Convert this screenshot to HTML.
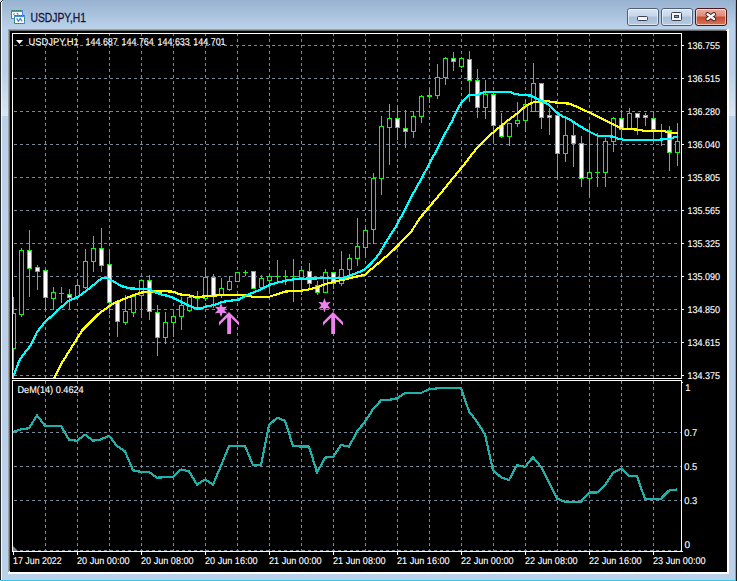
<!DOCTYPE html>
<html><head><meta charset="utf-8"><title>USDJPY,H1</title>
<style>
html,body{margin:0;padding:0;width:739px;height:581px;overflow:hidden;background:#b9d1ea;}
svg{display:block;}
text{font-family:"Liberation Sans",sans-serif;}
</style></head><body>
<svg width="739" height="581" viewBox="0 0 739 581">
<defs>
<linearGradient id="tg" x1="0" y1="0" x2="0" y2="1">
<stop offset="0" stop-color="#97b1d0"/><stop offset="1" stop-color="#bcd3ea"/>
</linearGradient>
<linearGradient id="sg" x1="0" y1="0" x2="0" y2="1">
<stop offset="0" stop-color="#b9d1ea"/><stop offset="1" stop-color="#d9e6f4"/>
</linearGradient>
<linearGradient id="bg1" x1="0" y1="0" x2="0" y2="1">
<stop offset="0" stop-color="#dbe6f3"/><stop offset="0.45" stop-color="#c6d6ea"/><stop offset="0.5" stop-color="#a9bfd9"/><stop offset="1" stop-color="#b7cae0"/>
</linearGradient>
<linearGradient id="bg2" x1="0" y1="0" x2="0" y2="1">
<stop offset="0" stop-color="#eab0a2"/><stop offset="0.45" stop-color="#de8c78"/><stop offset="0.5" stop-color="#c74a2c"/><stop offset="1" stop-color="#d7775d"/>
</linearGradient>
</defs>

<rect x="0" y="0" width="739" height="581" fill="#b9d1ea"/>
<rect x="0" y="0" width="739" height="29" fill="url(#tg)"/>
<g shape-rendering="crispEdges">
<rect x="0" y="0" width="1" height="581" fill="#262626"/>
<rect x="1" y="2" width="1" height="579" fill="#f4f8fc"/>
<rect x="0" y="0" width="2" height="2" fill="#cfdff0"/>
<rect x="1" y="1" width="1" height="1" fill="#303030"/>
<rect x="2" y="0" width="1" height="1" fill="#404040"/>
<rect x="2" y="1" width="1" height="1" fill="#e8f0f8"/>
<rect x="0" y="580" width="736" height="1" fill="#35c8e6"/>
<rect x="735" y="0" width="1" height="581" fill="#35c8e6"/>
<rect x="736" y="0" width="1" height="581" fill="#1a1a1a"/>
<rect x="737" y="0" width="2" height="581" fill="#ffffff"/>
<rect x="8" y="29" width="721" height="545" fill="#ffffff"/>
<rect x="8" y="29" width="719" height="1" fill="#a0a0a0"/>
<rect x="8" y="29" width="1" height="543" fill="#a0a0a0"/>
<rect x="9" y="30" width="717" height="1" fill="#696969"/>
<rect x="9" y="30" width="1" height="541" fill="#696969"/>
<rect x="10" y="31" width="717" height="541" fill="#000000"/>
<rect x="2" y="72" width="6" height="44" fill="url(#sg)"/>
<rect x="729" y="72" width="6" height="44" fill="url(#sg)"/>
</g>
<g shape-rendering="crispEdges">
<rect x="11" y="10" width="12" height="9" fill="#4a88ee"/>
<rect x="12" y="12" width="10" height="6" fill="#fbfcf4"/>
<rect x="14" y="15" width="11" height="9" fill="#4a88ee"/>
<rect x="15" y="17" width="9" height="6" fill="#fbfcf4"/>
</g>
<g fill="#2f7a62" shape-rendering="crispEdges">
<rect x="12" y="10" width="1" height="1"/><rect x="14" y="10" width="1" height="1"/><rect x="16" y="10" width="1" height="1"/><rect x="18" y="10" width="1" height="1"/><rect x="20" y="10" width="1" height="1"/>
<rect x="15" y="15" width="1" height="1"/><rect x="17" y="15" width="1" height="1"/><rect x="19" y="15" width="1" height="1"/><rect x="21" y="15" width="1" height="1"/><rect x="23" y="15" width="1" height="1"/>
<rect x="11" y="12" width="1" height="1"/><rect x="11" y="14" width="1" height="1"/><rect x="11" y="16" width="1" height="1"/>
<rect x="14" y="18" width="1" height="1"/><rect x="14" y="20" width="1" height="1"/><rect x="14" y="22" width="1" height="1"/>
<rect x="24" y="18" width="1" height="1"/><rect x="24" y="20" width="1" height="1"/><rect x="16" y="23" width="1" height="1"/><rect x="18" y="23" width="1" height="1"/><rect x="20" y="23" width="1" height="1"/><rect x="22" y="23" width="1" height="1"/>
</g>
<path d="M13.2 14.6 L14.6 13.4 M16.8 13 L18.4 14.6" fill="none" stroke="#4a88ee" stroke-width="1.1"/>
<path d="M16.6 18.4 L18.4 21.4 L20.2 18.4 L22.2 21.4" fill="none" stroke="#3d7fe6" stroke-width="1.1"/>

<text x="30.5" y="21.6" font-size="12" fill="#15153a" stroke="#15153a" stroke-width="0.3" textLength="55.5" lengthAdjust="spacingAndGlyphs">USDJPY,H1</text>
<rect x="627.5" y="8.5" width="31" height="17" rx="2.5" ry="2.5" fill="url(#bg1)" stroke="#4e5f78" stroke-width="1"/><rect x="628.5" y="9.5" width="29" height="15" rx="1.5" ry="1.5" fill="none" stroke="rgba(255,255,255,0.55)" stroke-width="1"/>
<rect x="661.5" y="8.5" width="31" height="17" rx="2.5" ry="2.5" fill="url(#bg1)" stroke="#4e5f78" stroke-width="1"/><rect x="662.5" y="9.5" width="29" height="15" rx="1.5" ry="1.5" fill="none" stroke="rgba(255,255,255,0.55)" stroke-width="1"/>
<rect x="695.5" y="8.5" width="31" height="17" rx="2.5" ry="2.5" fill="url(#bg2)" stroke="#4a1418" stroke-width="1"/><rect x="696.5" y="9.5" width="29" height="15" rx="1.5" ry="1.5" fill="none" stroke="rgba(255,255,255,0.55)" stroke-width="1"/>
<rect x="637.5" y="16.5" width="10" height="4" rx="1" fill="#f4f4f4" stroke="#3a4150" stroke-width="1"/>
<rect x="671.5" y="12.5" width="10" height="8" rx="1" fill="#f4f4f4" stroke="#3a4150" stroke-width="1"/>
<rect x="674.5" y="15.5" width="4" height="2" fill="#7f9cc4" stroke="#3a4150" stroke-width="1"/>
<path d="M707.6 14.3 L714 19 M714 14.3 L707.6 19" stroke="#3a2020" stroke-width="4.3" stroke-linecap="round"/>
<path d="M707.6 14.3 L714 19 M714 14.3 L707.6 19" stroke="#f6f6f6" stroke-width="2.5" stroke-linecap="round"/>
<path d="M14 45.5h3M20 45.5h3M26 45.5h3M32 45.5h3M38 45.5h3M44 45.5h3M50 45.5h3M56 45.5h3M62 45.5h3M68 45.5h3M74 45.5h3M80 45.5h3M86 45.5h3M92 45.5h3M98 45.5h3M104 45.5h3M110 45.5h3M116 45.5h3M122 45.5h3M128 45.5h3M134 45.5h3M140 45.5h3M146 45.5h3M152 45.5h3M158 45.5h3M164 45.5h3M170 45.5h3M176 45.5h3M182 45.5h3M188 45.5h3M194 45.5h3M200 45.5h3M206 45.5h3M212 45.5h3M218 45.5h3M224 45.5h3M230 45.5h3M236 45.5h3M242 45.5h3M248 45.5h3M254 45.5h3M260 45.5h3M266 45.5h3M272 45.5h3M278 45.5h3M284 45.5h3M290 45.5h3M296 45.5h3M302 45.5h3M308 45.5h3M314 45.5h3M320 45.5h3M326 45.5h3M332 45.5h3M338 45.5h3M344 45.5h3M350 45.5h3M356 45.5h3M362 45.5h3M368 45.5h3M374 45.5h3M380 45.5h3M386 45.5h3M392 45.5h3M398 45.5h3M404 45.5h3M410 45.5h3M416 45.5h3M422 45.5h3M428 45.5h3M434 45.5h3M440 45.5h3M446 45.5h3M452 45.5h3M458 45.5h3M464 45.5h3M470 45.5h3M476 45.5h3M482 45.5h3M488 45.5h3M494 45.5h3M500 45.5h3M506 45.5h3M512 45.5h3M518 45.5h3M524 45.5h3M530 45.5h3M536 45.5h3M542 45.5h3M548 45.5h3M554 45.5h3M560 45.5h3M566 45.5h3M572 45.5h3M578 45.5h3M584 45.5h3M590 45.5h3M596 45.5h3M602 45.5h3M608 45.5h3M614 45.5h3M620 45.5h3M626 45.5h3M632 45.5h3M638 45.5h3M644 45.5h3M650 45.5h3M656 45.5h3M662 45.5h3M668 45.5h3M674 45.5h3M14 78.5h3M20 78.5h3M26 78.5h3M32 78.5h3M38 78.5h3M44 78.5h3M50 78.5h3M56 78.5h3M62 78.5h3M68 78.5h3M74 78.5h3M80 78.5h3M86 78.5h3M92 78.5h3M98 78.5h3M104 78.5h3M110 78.5h3M116 78.5h3M122 78.5h3M128 78.5h3M134 78.5h3M140 78.5h3M146 78.5h3M152 78.5h3M158 78.5h3M164 78.5h3M170 78.5h3M176 78.5h3M182 78.5h3M188 78.5h3M194 78.5h3M200 78.5h3M206 78.5h3M212 78.5h3M218 78.5h3M224 78.5h3M230 78.5h3M236 78.5h3M242 78.5h3M248 78.5h3M254 78.5h3M260 78.5h3M266 78.5h3M272 78.5h3M278 78.5h3M284 78.5h3M290 78.5h3M296 78.5h3M302 78.5h3M308 78.5h3M314 78.5h3M320 78.5h3M326 78.5h3M332 78.5h3M338 78.5h3M344 78.5h3M350 78.5h3M356 78.5h3M362 78.5h3M368 78.5h3M374 78.5h3M380 78.5h3M386 78.5h3M392 78.5h3M398 78.5h3M404 78.5h3M410 78.5h3M416 78.5h3M422 78.5h3M428 78.5h3M434 78.5h3M440 78.5h3M446 78.5h3M452 78.5h3M458 78.5h3M464 78.5h3M470 78.5h3M476 78.5h3M482 78.5h3M488 78.5h3M494 78.5h3M500 78.5h3M506 78.5h3M512 78.5h3M518 78.5h3M524 78.5h3M530 78.5h3M536 78.5h3M542 78.5h3M548 78.5h3M554 78.5h3M560 78.5h3M566 78.5h3M572 78.5h3M578 78.5h3M584 78.5h3M590 78.5h3M596 78.5h3M602 78.5h3M608 78.5h3M614 78.5h3M620 78.5h3M626 78.5h3M632 78.5h3M638 78.5h3M644 78.5h3M650 78.5h3M656 78.5h3M662 78.5h3M668 78.5h3M674 78.5h3M14 111.5h3M20 111.5h3M26 111.5h3M32 111.5h3M38 111.5h3M44 111.5h3M50 111.5h3M56 111.5h3M62 111.5h3M68 111.5h3M74 111.5h3M80 111.5h3M86 111.5h3M92 111.5h3M98 111.5h3M104 111.5h3M110 111.5h3M116 111.5h3M122 111.5h3M128 111.5h3M134 111.5h3M140 111.5h3M146 111.5h3M152 111.5h3M158 111.5h3M164 111.5h3M170 111.5h3M176 111.5h3M182 111.5h3M188 111.5h3M194 111.5h3M200 111.5h3M206 111.5h3M212 111.5h3M218 111.5h3M224 111.5h3M230 111.5h3M236 111.5h3M242 111.5h3M248 111.5h3M254 111.5h3M260 111.5h3M266 111.5h3M272 111.5h3M278 111.5h3M284 111.5h3M290 111.5h3M296 111.5h3M302 111.5h3M308 111.5h3M314 111.5h3M320 111.5h3M326 111.5h3M332 111.5h3M338 111.5h3M344 111.5h3M350 111.5h3M356 111.5h3M362 111.5h3M368 111.5h3M374 111.5h3M380 111.5h3M386 111.5h3M392 111.5h3M398 111.5h3M404 111.5h3M410 111.5h3M416 111.5h3M422 111.5h3M428 111.5h3M434 111.5h3M440 111.5h3M446 111.5h3M452 111.5h3M458 111.5h3M464 111.5h3M470 111.5h3M476 111.5h3M482 111.5h3M488 111.5h3M494 111.5h3M500 111.5h3M506 111.5h3M512 111.5h3M518 111.5h3M524 111.5h3M530 111.5h3M536 111.5h3M542 111.5h3M548 111.5h3M554 111.5h3M560 111.5h3M566 111.5h3M572 111.5h3M578 111.5h3M584 111.5h3M590 111.5h3M596 111.5h3M602 111.5h3M608 111.5h3M614 111.5h3M620 111.5h3M626 111.5h3M632 111.5h3M638 111.5h3M644 111.5h3M650 111.5h3M656 111.5h3M662 111.5h3M668 111.5h3M674 111.5h3M14 144.5h3M20 144.5h3M26 144.5h3M32 144.5h3M38 144.5h3M44 144.5h3M50 144.5h3M56 144.5h3M62 144.5h3M68 144.5h3M74 144.5h3M80 144.5h3M86 144.5h3M92 144.5h3M98 144.5h3M104 144.5h3M110 144.5h3M116 144.5h3M122 144.5h3M128 144.5h3M134 144.5h3M140 144.5h3M146 144.5h3M152 144.5h3M158 144.5h3M164 144.5h3M170 144.5h3M176 144.5h3M182 144.5h3M188 144.5h3M194 144.5h3M200 144.5h3M206 144.5h3M212 144.5h3M218 144.5h3M224 144.5h3M230 144.5h3M236 144.5h3M242 144.5h3M248 144.5h3M254 144.5h3M260 144.5h3M266 144.5h3M272 144.5h3M278 144.5h3M284 144.5h3M290 144.5h3M296 144.5h3M302 144.5h3M308 144.5h3M314 144.5h3M320 144.5h3M326 144.5h3M332 144.5h3M338 144.5h3M344 144.5h3M350 144.5h3M356 144.5h3M362 144.5h3M368 144.5h3M374 144.5h3M380 144.5h3M386 144.5h3M392 144.5h3M398 144.5h3M404 144.5h3M410 144.5h3M416 144.5h3M422 144.5h3M428 144.5h3M434 144.5h3M440 144.5h3M446 144.5h3M452 144.5h3M458 144.5h3M464 144.5h3M470 144.5h3M476 144.5h3M482 144.5h3M488 144.5h3M494 144.5h3M500 144.5h3M506 144.5h3M512 144.5h3M518 144.5h3M524 144.5h3M530 144.5h3M536 144.5h3M542 144.5h3M548 144.5h3M554 144.5h3M560 144.5h3M566 144.5h3M572 144.5h3M578 144.5h3M584 144.5h3M590 144.5h3M596 144.5h3M602 144.5h3M608 144.5h3M614 144.5h3M620 144.5h3M626 144.5h3M632 144.5h3M638 144.5h3M644 144.5h3M650 144.5h3M656 144.5h3M662 144.5h3M668 144.5h3M674 144.5h3M14 177.5h3M20 177.5h3M26 177.5h3M32 177.5h3M38 177.5h3M44 177.5h3M50 177.5h3M56 177.5h3M62 177.5h3M68 177.5h3M74 177.5h3M80 177.5h3M86 177.5h3M92 177.5h3M98 177.5h3M104 177.5h3M110 177.5h3M116 177.5h3M122 177.5h3M128 177.5h3M134 177.5h3M140 177.5h3M146 177.5h3M152 177.5h3M158 177.5h3M164 177.5h3M170 177.5h3M176 177.5h3M182 177.5h3M188 177.5h3M194 177.5h3M200 177.5h3M206 177.5h3M212 177.5h3M218 177.5h3M224 177.5h3M230 177.5h3M236 177.5h3M242 177.5h3M248 177.5h3M254 177.5h3M260 177.5h3M266 177.5h3M272 177.5h3M278 177.5h3M284 177.5h3M290 177.5h3M296 177.5h3M302 177.5h3M308 177.5h3M314 177.5h3M320 177.5h3M326 177.5h3M332 177.5h3M338 177.5h3M344 177.5h3M350 177.5h3M356 177.5h3M362 177.5h3M368 177.5h3M374 177.5h3M380 177.5h3M386 177.5h3M392 177.5h3M398 177.5h3M404 177.5h3M410 177.5h3M416 177.5h3M422 177.5h3M428 177.5h3M434 177.5h3M440 177.5h3M446 177.5h3M452 177.5h3M458 177.5h3M464 177.5h3M470 177.5h3M476 177.5h3M482 177.5h3M488 177.5h3M494 177.5h3M500 177.5h3M506 177.5h3M512 177.5h3M518 177.5h3M524 177.5h3M530 177.5h3M536 177.5h3M542 177.5h3M548 177.5h3M554 177.5h3M560 177.5h3M566 177.5h3M572 177.5h3M578 177.5h3M584 177.5h3M590 177.5h3M596 177.5h3M602 177.5h3M608 177.5h3M614 177.5h3M620 177.5h3M626 177.5h3M632 177.5h3M638 177.5h3M644 177.5h3M650 177.5h3M656 177.5h3M662 177.5h3M668 177.5h3M674 177.5h3M14 210.5h3M20 210.5h3M26 210.5h3M32 210.5h3M38 210.5h3M44 210.5h3M50 210.5h3M56 210.5h3M62 210.5h3M68 210.5h3M74 210.5h3M80 210.5h3M86 210.5h3M92 210.5h3M98 210.5h3M104 210.5h3M110 210.5h3M116 210.5h3M122 210.5h3M128 210.5h3M134 210.5h3M140 210.5h3M146 210.5h3M152 210.5h3M158 210.5h3M164 210.5h3M170 210.5h3M176 210.5h3M182 210.5h3M188 210.5h3M194 210.5h3M200 210.5h3M206 210.5h3M212 210.5h3M218 210.5h3M224 210.5h3M230 210.5h3M236 210.5h3M242 210.5h3M248 210.5h3M254 210.5h3M260 210.5h3M266 210.5h3M272 210.5h3M278 210.5h3M284 210.5h3M290 210.5h3M296 210.5h3M302 210.5h3M308 210.5h3M314 210.5h3M320 210.5h3M326 210.5h3M332 210.5h3M338 210.5h3M344 210.5h3M350 210.5h3M356 210.5h3M362 210.5h3M368 210.5h3M374 210.5h3M380 210.5h3M386 210.5h3M392 210.5h3M398 210.5h3M404 210.5h3M410 210.5h3M416 210.5h3M422 210.5h3M428 210.5h3M434 210.5h3M440 210.5h3M446 210.5h3M452 210.5h3M458 210.5h3M464 210.5h3M470 210.5h3M476 210.5h3M482 210.5h3M488 210.5h3M494 210.5h3M500 210.5h3M506 210.5h3M512 210.5h3M518 210.5h3M524 210.5h3M530 210.5h3M536 210.5h3M542 210.5h3M548 210.5h3M554 210.5h3M560 210.5h3M566 210.5h3M572 210.5h3M578 210.5h3M584 210.5h3M590 210.5h3M596 210.5h3M602 210.5h3M608 210.5h3M614 210.5h3M620 210.5h3M626 210.5h3M632 210.5h3M638 210.5h3M644 210.5h3M650 210.5h3M656 210.5h3M662 210.5h3M668 210.5h3M674 210.5h3M14 243.5h3M20 243.5h3M26 243.5h3M32 243.5h3M38 243.5h3M44 243.5h3M50 243.5h3M56 243.5h3M62 243.5h3M68 243.5h3M74 243.5h3M80 243.5h3M86 243.5h3M92 243.5h3M98 243.5h3M104 243.5h3M110 243.5h3M116 243.5h3M122 243.5h3M128 243.5h3M134 243.5h3M140 243.5h3M146 243.5h3M152 243.5h3M158 243.5h3M164 243.5h3M170 243.5h3M176 243.5h3M182 243.5h3M188 243.5h3M194 243.5h3M200 243.5h3M206 243.5h3M212 243.5h3M218 243.5h3M224 243.5h3M230 243.5h3M236 243.5h3M242 243.5h3M248 243.5h3M254 243.5h3M260 243.5h3M266 243.5h3M272 243.5h3M278 243.5h3M284 243.5h3M290 243.5h3M296 243.5h3M302 243.5h3M308 243.5h3M314 243.5h3M320 243.5h3M326 243.5h3M332 243.5h3M338 243.5h3M344 243.5h3M350 243.5h3M356 243.5h3M362 243.5h3M368 243.5h3M374 243.5h3M380 243.5h3M386 243.5h3M392 243.5h3M398 243.5h3M404 243.5h3M410 243.5h3M416 243.5h3M422 243.5h3M428 243.5h3M434 243.5h3M440 243.5h3M446 243.5h3M452 243.5h3M458 243.5h3M464 243.5h3M470 243.5h3M476 243.5h3M482 243.5h3M488 243.5h3M494 243.5h3M500 243.5h3M506 243.5h3M512 243.5h3M518 243.5h3M524 243.5h3M530 243.5h3M536 243.5h3M542 243.5h3M548 243.5h3M554 243.5h3M560 243.5h3M566 243.5h3M572 243.5h3M578 243.5h3M584 243.5h3M590 243.5h3M596 243.5h3M602 243.5h3M608 243.5h3M614 243.5h3M620 243.5h3M626 243.5h3M632 243.5h3M638 243.5h3M644 243.5h3M650 243.5h3M656 243.5h3M662 243.5h3M668 243.5h3M674 243.5h3M14 276.5h3M20 276.5h3M26 276.5h3M32 276.5h3M38 276.5h3M44 276.5h3M50 276.5h3M56 276.5h3M62 276.5h3M68 276.5h3M74 276.5h3M80 276.5h3M86 276.5h3M92 276.5h3M98 276.5h3M104 276.5h3M110 276.5h3M116 276.5h3M122 276.5h3M128 276.5h3M134 276.5h3M140 276.5h3M146 276.5h3M152 276.5h3M158 276.5h3M164 276.5h3M170 276.5h3M176 276.5h3M182 276.5h3M188 276.5h3M194 276.5h3M200 276.5h3M206 276.5h3M212 276.5h3M218 276.5h3M224 276.5h3M230 276.5h3M236 276.5h3M242 276.5h3M248 276.5h3M254 276.5h3M260 276.5h3M266 276.5h3M272 276.5h3M278 276.5h3M284 276.5h3M290 276.5h3M296 276.5h3M302 276.5h3M308 276.5h3M314 276.5h3M320 276.5h3M326 276.5h3M332 276.5h3M338 276.5h3M344 276.5h3M350 276.5h3M356 276.5h3M362 276.5h3M368 276.5h3M374 276.5h3M380 276.5h3M386 276.5h3M392 276.5h3M398 276.5h3M404 276.5h3M410 276.5h3M416 276.5h3M422 276.5h3M428 276.5h3M434 276.5h3M440 276.5h3M446 276.5h3M452 276.5h3M458 276.5h3M464 276.5h3M470 276.5h3M476 276.5h3M482 276.5h3M488 276.5h3M494 276.5h3M500 276.5h3M506 276.5h3M512 276.5h3M518 276.5h3M524 276.5h3M530 276.5h3M536 276.5h3M542 276.5h3M548 276.5h3M554 276.5h3M560 276.5h3M566 276.5h3M572 276.5h3M578 276.5h3M584 276.5h3M590 276.5h3M596 276.5h3M602 276.5h3M608 276.5h3M614 276.5h3M620 276.5h3M626 276.5h3M632 276.5h3M638 276.5h3M644 276.5h3M650 276.5h3M656 276.5h3M662 276.5h3M668 276.5h3M674 276.5h3M14 309.5h3M20 309.5h3M26 309.5h3M32 309.5h3M38 309.5h3M44 309.5h3M50 309.5h3M56 309.5h3M62 309.5h3M68 309.5h3M74 309.5h3M80 309.5h3M86 309.5h3M92 309.5h3M98 309.5h3M104 309.5h3M110 309.5h3M116 309.5h3M122 309.5h3M128 309.5h3M134 309.5h3M140 309.5h3M146 309.5h3M152 309.5h3M158 309.5h3M164 309.5h3M170 309.5h3M176 309.5h3M182 309.5h3M188 309.5h3M194 309.5h3M200 309.5h3M206 309.5h3M212 309.5h3M218 309.5h3M224 309.5h3M230 309.5h3M236 309.5h3M242 309.5h3M248 309.5h3M254 309.5h3M260 309.5h3M266 309.5h3M272 309.5h3M278 309.5h3M284 309.5h3M290 309.5h3M296 309.5h3M302 309.5h3M308 309.5h3M314 309.5h3M320 309.5h3M326 309.5h3M332 309.5h3M338 309.5h3M344 309.5h3M350 309.5h3M356 309.5h3M362 309.5h3M368 309.5h3M374 309.5h3M380 309.5h3M386 309.5h3M392 309.5h3M398 309.5h3M404 309.5h3M410 309.5h3M416 309.5h3M422 309.5h3M428 309.5h3M434 309.5h3M440 309.5h3M446 309.5h3M452 309.5h3M458 309.5h3M464 309.5h3M470 309.5h3M476 309.5h3M482 309.5h3M488 309.5h3M494 309.5h3M500 309.5h3M506 309.5h3M512 309.5h3M518 309.5h3M524 309.5h3M530 309.5h3M536 309.5h3M542 309.5h3M548 309.5h3M554 309.5h3M560 309.5h3M566 309.5h3M572 309.5h3M578 309.5h3M584 309.5h3M590 309.5h3M596 309.5h3M602 309.5h3M608 309.5h3M614 309.5h3M620 309.5h3M626 309.5h3M632 309.5h3M638 309.5h3M644 309.5h3M650 309.5h3M656 309.5h3M662 309.5h3M668 309.5h3M674 309.5h3M14 342.5h3M20 342.5h3M26 342.5h3M32 342.5h3M38 342.5h3M44 342.5h3M50 342.5h3M56 342.5h3M62 342.5h3M68 342.5h3M74 342.5h3M80 342.5h3M86 342.5h3M92 342.5h3M98 342.5h3M104 342.5h3M110 342.5h3M116 342.5h3M122 342.5h3M128 342.5h3M134 342.5h3M140 342.5h3M146 342.5h3M152 342.5h3M158 342.5h3M164 342.5h3M170 342.5h3M176 342.5h3M182 342.5h3M188 342.5h3M194 342.5h3M200 342.5h3M206 342.5h3M212 342.5h3M218 342.5h3M224 342.5h3M230 342.5h3M236 342.5h3M242 342.5h3M248 342.5h3M254 342.5h3M260 342.5h3M266 342.5h3M272 342.5h3M278 342.5h3M284 342.5h3M290 342.5h3M296 342.5h3M302 342.5h3M308 342.5h3M314 342.5h3M320 342.5h3M326 342.5h3M332 342.5h3M338 342.5h3M344 342.5h3M350 342.5h3M356 342.5h3M362 342.5h3M368 342.5h3M374 342.5h3M380 342.5h3M386 342.5h3M392 342.5h3M398 342.5h3M404 342.5h3M410 342.5h3M416 342.5h3M422 342.5h3M428 342.5h3M434 342.5h3M440 342.5h3M446 342.5h3M452 342.5h3M458 342.5h3M464 342.5h3M470 342.5h3M476 342.5h3M482 342.5h3M488 342.5h3M494 342.5h3M500 342.5h3M506 342.5h3M512 342.5h3M518 342.5h3M524 342.5h3M530 342.5h3M536 342.5h3M542 342.5h3M548 342.5h3M554 342.5h3M560 342.5h3M566 342.5h3M572 342.5h3M578 342.5h3M584 342.5h3M590 342.5h3M596 342.5h3M602 342.5h3M608 342.5h3M614 342.5h3M620 342.5h3M626 342.5h3M632 342.5h3M638 342.5h3M644 342.5h3M650 342.5h3M656 342.5h3M662 342.5h3M668 342.5h3M674 342.5h3M14 375.5h3M20 375.5h3M26 375.5h3M32 375.5h3M38 375.5h3M44 375.5h3M50 375.5h3M56 375.5h3M62 375.5h3M68 375.5h3M74 375.5h3M80 375.5h3M86 375.5h3M92 375.5h3M98 375.5h3M104 375.5h3M110 375.5h3M116 375.5h3M122 375.5h3M128 375.5h3M134 375.5h3M140 375.5h3M146 375.5h3M152 375.5h3M158 375.5h3M164 375.5h3M170 375.5h3M176 375.5h3M182 375.5h3M188 375.5h3M194 375.5h3M200 375.5h3M206 375.5h3M212 375.5h3M218 375.5h3M224 375.5h3M230 375.5h3M236 375.5h3M242 375.5h3M248 375.5h3M254 375.5h3M260 375.5h3M266 375.5h3M272 375.5h3M278 375.5h3M284 375.5h3M290 375.5h3M296 375.5h3M302 375.5h3M308 375.5h3M314 375.5h3M320 375.5h3M326 375.5h3M332 375.5h3M338 375.5h3M344 375.5h3M350 375.5h3M356 375.5h3M362 375.5h3M368 375.5h3M374 375.5h3M380 375.5h3M386 375.5h3M392 375.5h3M398 375.5h3M404 375.5h3M410 375.5h3M416 375.5h3M422 375.5h3M428 375.5h3M434 375.5h3M440 375.5h3M446 375.5h3M452 375.5h3M458 375.5h3M464 375.5h3M470 375.5h3M476 375.5h3M482 375.5h3M488 375.5h3M494 375.5h3M500 375.5h3M506 375.5h3M512 375.5h3M518 375.5h3M524 375.5h3M530 375.5h3M536 375.5h3M542 375.5h3M548 375.5h3M554 375.5h3M560 375.5h3M566 375.5h3M572 375.5h3M578 375.5h3M584 375.5h3M590 375.5h3M596 375.5h3M602 375.5h3M608 375.5h3M614 375.5h3M620 375.5h3M626 375.5h3M632 375.5h3M638 375.5h3M644 375.5h3M650 375.5h3M656 375.5h3M662 375.5h3M668 375.5h3M674 375.5h3M14 432.5h3M20 432.5h3M26 432.5h3M32 432.5h3M38 432.5h3M44 432.5h3M50 432.5h3M56 432.5h3M62 432.5h3M68 432.5h3M74 432.5h3M80 432.5h3M86 432.5h3M92 432.5h3M98 432.5h3M104 432.5h3M110 432.5h3M116 432.5h3M122 432.5h3M128 432.5h3M134 432.5h3M140 432.5h3M146 432.5h3M152 432.5h3M158 432.5h3M164 432.5h3M170 432.5h3M176 432.5h3M182 432.5h3M188 432.5h3M194 432.5h3M200 432.5h3M206 432.5h3M212 432.5h3M218 432.5h3M224 432.5h3M230 432.5h3M236 432.5h3M242 432.5h3M248 432.5h3M254 432.5h3M260 432.5h3M266 432.5h3M272 432.5h3M278 432.5h3M284 432.5h3M290 432.5h3M296 432.5h3M302 432.5h3M308 432.5h3M314 432.5h3M320 432.5h3M326 432.5h3M332 432.5h3M338 432.5h3M344 432.5h3M350 432.5h3M356 432.5h3M362 432.5h3M368 432.5h3M374 432.5h3M380 432.5h3M386 432.5h3M392 432.5h3M398 432.5h3M404 432.5h3M410 432.5h3M416 432.5h3M422 432.5h3M428 432.5h3M434 432.5h3M440 432.5h3M446 432.5h3M452 432.5h3M458 432.5h3M464 432.5h3M470 432.5h3M476 432.5h3M482 432.5h3M488 432.5h3M494 432.5h3M500 432.5h3M506 432.5h3M512 432.5h3M518 432.5h3M524 432.5h3M530 432.5h3M536 432.5h3M542 432.5h3M548 432.5h3M554 432.5h3M560 432.5h3M566 432.5h3M572 432.5h3M578 432.5h3M584 432.5h3M590 432.5h3M596 432.5h3M602 432.5h3M608 432.5h3M614 432.5h3M620 432.5h3M626 432.5h3M632 432.5h3M638 432.5h3M644 432.5h3M650 432.5h3M656 432.5h3M662 432.5h3M668 432.5h3M674 432.5h3M680 432.5h1M14 466.5h3M20 466.5h3M26 466.5h3M32 466.5h3M38 466.5h3M44 466.5h3M50 466.5h3M56 466.5h3M62 466.5h3M68 466.5h3M74 466.5h3M80 466.5h3M86 466.5h3M92 466.5h3M98 466.5h3M104 466.5h3M110 466.5h3M116 466.5h3M122 466.5h3M128 466.5h3M134 466.5h3M140 466.5h3M146 466.5h3M152 466.5h3M158 466.5h3M164 466.5h3M170 466.5h3M176 466.5h3M182 466.5h3M188 466.5h3M194 466.5h3M200 466.5h3M206 466.5h3M212 466.5h3M218 466.5h3M224 466.5h3M230 466.5h3M236 466.5h3M242 466.5h3M248 466.5h3M254 466.5h3M260 466.5h3M266 466.5h3M272 466.5h3M278 466.5h3M284 466.5h3M290 466.5h3M296 466.5h3M302 466.5h3M308 466.5h3M314 466.5h3M320 466.5h3M326 466.5h3M332 466.5h3M338 466.5h3M344 466.5h3M350 466.5h3M356 466.5h3M362 466.5h3M368 466.5h3M374 466.5h3M380 466.5h3M386 466.5h3M392 466.5h3M398 466.5h3M404 466.5h3M410 466.5h3M416 466.5h3M422 466.5h3M428 466.5h3M434 466.5h3M440 466.5h3M446 466.5h3M452 466.5h3M458 466.5h3M464 466.5h3M470 466.5h3M476 466.5h3M482 466.5h3M488 466.5h3M494 466.5h3M500 466.5h3M506 466.5h3M512 466.5h3M518 466.5h3M524 466.5h3M530 466.5h3M536 466.5h3M542 466.5h3M548 466.5h3M554 466.5h3M560 466.5h3M566 466.5h3M572 466.5h3M578 466.5h3M584 466.5h3M590 466.5h3M596 466.5h3M602 466.5h3M608 466.5h3M614 466.5h3M620 466.5h3M626 466.5h3M632 466.5h3M638 466.5h3M644 466.5h3M650 466.5h3M656 466.5h3M662 466.5h3M668 466.5h3M674 466.5h3M680 466.5h1M14 500.5h3M20 500.5h3M26 500.5h3M32 500.5h3M38 500.5h3M44 500.5h3M50 500.5h3M56 500.5h3M62 500.5h3M68 500.5h3M74 500.5h3M80 500.5h3M86 500.5h3M92 500.5h3M98 500.5h3M104 500.5h3M110 500.5h3M116 500.5h3M122 500.5h3M128 500.5h3M134 500.5h3M140 500.5h3M146 500.5h3M152 500.5h3M158 500.5h3M164 500.5h3M170 500.5h3M176 500.5h3M182 500.5h3M188 500.5h3M194 500.5h3M200 500.5h3M206 500.5h3M212 500.5h3M218 500.5h3M224 500.5h3M230 500.5h3M236 500.5h3M242 500.5h3M248 500.5h3M254 500.5h3M260 500.5h3M266 500.5h3M272 500.5h3M278 500.5h3M284 500.5h3M290 500.5h3M296 500.5h3M302 500.5h3M308 500.5h3M314 500.5h3M320 500.5h3M326 500.5h3M332 500.5h3M338 500.5h3M344 500.5h3M350 500.5h3M356 500.5h3M362 500.5h3M368 500.5h3M374 500.5h3M380 500.5h3M386 500.5h3M392 500.5h3M398 500.5h3M404 500.5h3M410 500.5h3M416 500.5h3M422 500.5h3M428 500.5h3M434 500.5h3M440 500.5h3M446 500.5h3M452 500.5h3M458 500.5h3M464 500.5h3M470 500.5h3M476 500.5h3M482 500.5h3M488 500.5h3M494 500.5h3M500 500.5h3M506 500.5h3M512 500.5h3M518 500.5h3M524 500.5h3M530 500.5h3M536 500.5h3M542 500.5h3M548 500.5h3M554 500.5h3M560 500.5h3M566 500.5h3M572 500.5h3M578 500.5h3M584 500.5h3M590 500.5h3M596 500.5h3M602 500.5h3M608 500.5h3M614 500.5h3M620 500.5h3M626 500.5h3M632 500.5h3M638 500.5h3M644 500.5h3M650 500.5h3M656 500.5h3M662 500.5h3M668 500.5h3M674 500.5h3M680 500.5h1M14 550.5h3M20 550.5h3M26 550.5h3M32 550.5h3M38 550.5h3M44 550.5h3M50 550.5h3M56 550.5h3M62 550.5h3M68 550.5h3M74 550.5h3M80 550.5h3M86 550.5h3M92 550.5h3M98 550.5h3M104 550.5h3M110 550.5h3M116 550.5h3M122 550.5h3M128 550.5h3M134 550.5h3M140 550.5h3M146 550.5h3M152 550.5h3M158 550.5h3M164 550.5h3M170 550.5h3M176 550.5h3M182 550.5h3M188 550.5h3M194 550.5h3M200 550.5h3M206 550.5h3M212 550.5h3M218 550.5h3M224 550.5h3M230 550.5h3M236 550.5h3M242 550.5h3M248 550.5h3M254 550.5h3M260 550.5h3M266 550.5h3M272 550.5h3M278 550.5h3M284 550.5h3M290 550.5h3M296 550.5h3M302 550.5h3M308 550.5h3M314 550.5h3M320 550.5h3M326 550.5h3M332 550.5h3M338 550.5h3M344 550.5h3M350 550.5h3M356 550.5h3M362 550.5h3M368 550.5h3M374 550.5h3M380 550.5h3M386 550.5h3M392 550.5h3M398 550.5h3M404 550.5h3M410 550.5h3M416 550.5h3M422 550.5h3M428 550.5h3M434 550.5h3M440 550.5h3M446 550.5h3M452 550.5h3M458 550.5h3M464 550.5h3M470 550.5h3M476 550.5h3M482 550.5h3M488 550.5h3M494 550.5h3M500 550.5h3M506 550.5h3M512 550.5h3M518 550.5h3M524 550.5h3M530 550.5h3M536 550.5h3M542 550.5h3M548 550.5h3M554 550.5h3M560 550.5h3M566 550.5h3M572 550.5h3M578 550.5h3M584 550.5h3M590 550.5h3M596 550.5h3M602 550.5h3M608 550.5h3M614 550.5h3M620 550.5h3M626 550.5h3M632 550.5h3M638 550.5h3M644 550.5h3M650 550.5h3M656 550.5h3M662 550.5h3M668 550.5h3M674 550.5h3M680 550.5h1M45.5 34v2M45.5 39v3M45.5 45v3M45.5 51v3M45.5 57v3M45.5 63v3M45.5 69v3M45.5 75v3M45.5 81v3M45.5 87v3M45.5 93v3M45.5 99v3M45.5 105v3M45.5 111v3M45.5 117v3M45.5 123v3M45.5 129v3M45.5 135v3M45.5 141v3M45.5 147v3M45.5 153v3M45.5 159v3M45.5 165v3M45.5 171v3M45.5 177v3M45.5 183v3M45.5 189v3M45.5 195v3M45.5 201v3M45.5 207v3M45.5 213v3M45.5 219v3M45.5 225v3M45.5 231v3M45.5 237v3M45.5 243v3M45.5 249v3M45.5 255v3M45.5 261v3M45.5 267v3M45.5 273v3M45.5 279v3M45.5 285v3M45.5 291v3M45.5 297v3M45.5 303v3M45.5 309v3M45.5 315v3M45.5 321v3M45.5 327v3M45.5 333v3M45.5 339v3M45.5 345v3M45.5 351v3M45.5 357v3M45.5 363v3M45.5 369v3M45.5 375v3M45.5 381v3M45.5 387v3M45.5 393v3M45.5 399v3M45.5 405v3M45.5 411v3M45.5 417v3M45.5 423v3M45.5 429v3M45.5 435v3M45.5 441v3M45.5 447v3M45.5 453v3M45.5 459v3M45.5 465v3M45.5 471v3M45.5 477v3M45.5 483v3M45.5 489v3M45.5 495v3M45.5 501v3M45.5 507v3M45.5 513v3M45.5 519v3M45.5 525v3M45.5 531v3M45.5 537v3M45.5 543v3M45.5 549v2M77.5 34v2M77.5 39v3M77.5 45v3M77.5 51v3M77.5 57v3M77.5 63v3M77.5 69v3M77.5 75v3M77.5 81v3M77.5 87v3M77.5 93v3M77.5 99v3M77.5 105v3M77.5 111v3M77.5 117v3M77.5 123v3M77.5 129v3M77.5 135v3M77.5 141v3M77.5 147v3M77.5 153v3M77.5 159v3M77.5 165v3M77.5 171v3M77.5 177v3M77.5 183v3M77.5 189v3M77.5 195v3M77.5 201v3M77.5 207v3M77.5 213v3M77.5 219v3M77.5 225v3M77.5 231v3M77.5 237v3M77.5 243v3M77.5 249v3M77.5 255v3M77.5 261v3M77.5 267v3M77.5 273v3M77.5 279v3M77.5 285v3M77.5 291v3M77.5 297v3M77.5 303v3M77.5 309v3M77.5 315v3M77.5 321v3M77.5 327v3M77.5 333v3M77.5 339v3M77.5 345v3M77.5 351v3M77.5 357v3M77.5 363v3M77.5 369v3M77.5 375v3M77.5 381v3M77.5 387v3M77.5 393v3M77.5 399v3M77.5 405v3M77.5 411v3M77.5 417v3M77.5 423v3M77.5 429v3M77.5 435v3M77.5 441v3M77.5 447v3M77.5 453v3M77.5 459v3M77.5 465v3M77.5 471v3M77.5 477v3M77.5 483v3M77.5 489v3M77.5 495v3M77.5 501v3M77.5 507v3M77.5 513v3M77.5 519v3M77.5 525v3M77.5 531v3M77.5 537v3M77.5 543v3M77.5 549v2M109.5 34v2M109.5 39v3M109.5 45v3M109.5 51v3M109.5 57v3M109.5 63v3M109.5 69v3M109.5 75v3M109.5 81v3M109.5 87v3M109.5 93v3M109.5 99v3M109.5 105v3M109.5 111v3M109.5 117v3M109.5 123v3M109.5 129v3M109.5 135v3M109.5 141v3M109.5 147v3M109.5 153v3M109.5 159v3M109.5 165v3M109.5 171v3M109.5 177v3M109.5 183v3M109.5 189v3M109.5 195v3M109.5 201v3M109.5 207v3M109.5 213v3M109.5 219v3M109.5 225v3M109.5 231v3M109.5 237v3M109.5 243v3M109.5 249v3M109.5 255v3M109.5 261v3M109.5 267v3M109.5 273v3M109.5 279v3M109.5 285v3M109.5 291v3M109.5 297v3M109.5 303v3M109.5 309v3M109.5 315v3M109.5 321v3M109.5 327v3M109.5 333v3M109.5 339v3M109.5 345v3M109.5 351v3M109.5 357v3M109.5 363v3M109.5 369v3M109.5 375v3M109.5 381v3M109.5 387v3M109.5 393v3M109.5 399v3M109.5 405v3M109.5 411v3M109.5 417v3M109.5 423v3M109.5 429v3M109.5 435v3M109.5 441v3M109.5 447v3M109.5 453v3M109.5 459v3M109.5 465v3M109.5 471v3M109.5 477v3M109.5 483v3M109.5 489v3M109.5 495v3M109.5 501v3M109.5 507v3M109.5 513v3M109.5 519v3M109.5 525v3M109.5 531v3M109.5 537v3M109.5 543v3M109.5 549v2M141.5 34v2M141.5 39v3M141.5 45v3M141.5 51v3M141.5 57v3M141.5 63v3M141.5 69v3M141.5 75v3M141.5 81v3M141.5 87v3M141.5 93v3M141.5 99v3M141.5 105v3M141.5 111v3M141.5 117v3M141.5 123v3M141.5 129v3M141.5 135v3M141.5 141v3M141.5 147v3M141.5 153v3M141.5 159v3M141.5 165v3M141.5 171v3M141.5 177v3M141.5 183v3M141.5 189v3M141.5 195v3M141.5 201v3M141.5 207v3M141.5 213v3M141.5 219v3M141.5 225v3M141.5 231v3M141.5 237v3M141.5 243v3M141.5 249v3M141.5 255v3M141.5 261v3M141.5 267v3M141.5 273v3M141.5 279v3M141.5 285v3M141.5 291v3M141.5 297v3M141.5 303v3M141.5 309v3M141.5 315v3M141.5 321v3M141.5 327v3M141.5 333v3M141.5 339v3M141.5 345v3M141.5 351v3M141.5 357v3M141.5 363v3M141.5 369v3M141.5 375v3M141.5 381v3M141.5 387v3M141.5 393v3M141.5 399v3M141.5 405v3M141.5 411v3M141.5 417v3M141.5 423v3M141.5 429v3M141.5 435v3M141.5 441v3M141.5 447v3M141.5 453v3M141.5 459v3M141.5 465v3M141.5 471v3M141.5 477v3M141.5 483v3M141.5 489v3M141.5 495v3M141.5 501v3M141.5 507v3M141.5 513v3M141.5 519v3M141.5 525v3M141.5 531v3M141.5 537v3M141.5 543v3M141.5 549v2M173.5 34v2M173.5 39v3M173.5 45v3M173.5 51v3M173.5 57v3M173.5 63v3M173.5 69v3M173.5 75v3M173.5 81v3M173.5 87v3M173.5 93v3M173.5 99v3M173.5 105v3M173.5 111v3M173.5 117v3M173.5 123v3M173.5 129v3M173.5 135v3M173.5 141v3M173.5 147v3M173.5 153v3M173.5 159v3M173.5 165v3M173.5 171v3M173.5 177v3M173.5 183v3M173.5 189v3M173.5 195v3M173.5 201v3M173.5 207v3M173.5 213v3M173.5 219v3M173.5 225v3M173.5 231v3M173.5 237v3M173.5 243v3M173.5 249v3M173.5 255v3M173.5 261v3M173.5 267v3M173.5 273v3M173.5 279v3M173.5 285v3M173.5 291v3M173.5 297v3M173.5 303v3M173.5 309v3M173.5 315v3M173.5 321v3M173.5 327v3M173.5 333v3M173.5 339v3M173.5 345v3M173.5 351v3M173.5 357v3M173.5 363v3M173.5 369v3M173.5 375v3M173.5 381v3M173.5 387v3M173.5 393v3M173.5 399v3M173.5 405v3M173.5 411v3M173.5 417v3M173.5 423v3M173.5 429v3M173.5 435v3M173.5 441v3M173.5 447v3M173.5 453v3M173.5 459v3M173.5 465v3M173.5 471v3M173.5 477v3M173.5 483v3M173.5 489v3M173.5 495v3M173.5 501v3M173.5 507v3M173.5 513v3M173.5 519v3M173.5 525v3M173.5 531v3M173.5 537v3M173.5 543v3M173.5 549v2M205.5 34v2M205.5 39v3M205.5 45v3M205.5 51v3M205.5 57v3M205.5 63v3M205.5 69v3M205.5 75v3M205.5 81v3M205.5 87v3M205.5 93v3M205.5 99v3M205.5 105v3M205.5 111v3M205.5 117v3M205.5 123v3M205.5 129v3M205.5 135v3M205.5 141v3M205.5 147v3M205.5 153v3M205.5 159v3M205.5 165v3M205.5 171v3M205.5 177v3M205.5 183v3M205.5 189v3M205.5 195v3M205.5 201v3M205.5 207v3M205.5 213v3M205.5 219v3M205.5 225v3M205.5 231v3M205.5 237v3M205.5 243v3M205.5 249v3M205.5 255v3M205.5 261v3M205.5 267v3M205.5 273v3M205.5 279v3M205.5 285v3M205.5 291v3M205.5 297v3M205.5 303v3M205.5 309v3M205.5 315v3M205.5 321v3M205.5 327v3M205.5 333v3M205.5 339v3M205.5 345v3M205.5 351v3M205.5 357v3M205.5 363v3M205.5 369v3M205.5 375v3M205.5 381v3M205.5 387v3M205.5 393v3M205.5 399v3M205.5 405v3M205.5 411v3M205.5 417v3M205.5 423v3M205.5 429v3M205.5 435v3M205.5 441v3M205.5 447v3M205.5 453v3M205.5 459v3M205.5 465v3M205.5 471v3M205.5 477v3M205.5 483v3M205.5 489v3M205.5 495v3M205.5 501v3M205.5 507v3M205.5 513v3M205.5 519v3M205.5 525v3M205.5 531v3M205.5 537v3M205.5 543v3M205.5 549v2M237.5 34v2M237.5 39v3M237.5 45v3M237.5 51v3M237.5 57v3M237.5 63v3M237.5 69v3M237.5 75v3M237.5 81v3M237.5 87v3M237.5 93v3M237.5 99v3M237.5 105v3M237.5 111v3M237.5 117v3M237.5 123v3M237.5 129v3M237.5 135v3M237.5 141v3M237.5 147v3M237.5 153v3M237.5 159v3M237.5 165v3M237.5 171v3M237.5 177v3M237.5 183v3M237.5 189v3M237.5 195v3M237.5 201v3M237.5 207v3M237.5 213v3M237.5 219v3M237.5 225v3M237.5 231v3M237.5 237v3M237.5 243v3M237.5 249v3M237.5 255v3M237.5 261v3M237.5 267v3M237.5 273v3M237.5 279v3M237.5 285v3M237.5 291v3M237.5 297v3M237.5 303v3M237.5 309v3M237.5 315v3M237.5 321v3M237.5 327v3M237.5 333v3M237.5 339v3M237.5 345v3M237.5 351v3M237.5 357v3M237.5 363v3M237.5 369v3M237.5 375v3M237.5 381v3M237.5 387v3M237.5 393v3M237.5 399v3M237.5 405v3M237.5 411v3M237.5 417v3M237.5 423v3M237.5 429v3M237.5 435v3M237.5 441v3M237.5 447v3M237.5 453v3M237.5 459v3M237.5 465v3M237.5 471v3M237.5 477v3M237.5 483v3M237.5 489v3M237.5 495v3M237.5 501v3M237.5 507v3M237.5 513v3M237.5 519v3M237.5 525v3M237.5 531v3M237.5 537v3M237.5 543v3M237.5 549v2M269.5 34v2M269.5 39v3M269.5 45v3M269.5 51v3M269.5 57v3M269.5 63v3M269.5 69v3M269.5 75v3M269.5 81v3M269.5 87v3M269.5 93v3M269.5 99v3M269.5 105v3M269.5 111v3M269.5 117v3M269.5 123v3M269.5 129v3M269.5 135v3M269.5 141v3M269.5 147v3M269.5 153v3M269.5 159v3M269.5 165v3M269.5 171v3M269.5 177v3M269.5 183v3M269.5 189v3M269.5 195v3M269.5 201v3M269.5 207v3M269.5 213v3M269.5 219v3M269.5 225v3M269.5 231v3M269.5 237v3M269.5 243v3M269.5 249v3M269.5 255v3M269.5 261v3M269.5 267v3M269.5 273v3M269.5 279v3M269.5 285v3M269.5 291v3M269.5 297v3M269.5 303v3M269.5 309v3M269.5 315v3M269.5 321v3M269.5 327v3M269.5 333v3M269.5 339v3M269.5 345v3M269.5 351v3M269.5 357v3M269.5 363v3M269.5 369v3M269.5 375v3M269.5 381v3M269.5 387v3M269.5 393v3M269.5 399v3M269.5 405v3M269.5 411v3M269.5 417v3M269.5 423v3M269.5 429v3M269.5 435v3M269.5 441v3M269.5 447v3M269.5 453v3M269.5 459v3M269.5 465v3M269.5 471v3M269.5 477v3M269.5 483v3M269.5 489v3M269.5 495v3M269.5 501v3M269.5 507v3M269.5 513v3M269.5 519v3M269.5 525v3M269.5 531v3M269.5 537v3M269.5 543v3M269.5 549v2M301.5 34v2M301.5 39v3M301.5 45v3M301.5 51v3M301.5 57v3M301.5 63v3M301.5 69v3M301.5 75v3M301.5 81v3M301.5 87v3M301.5 93v3M301.5 99v3M301.5 105v3M301.5 111v3M301.5 117v3M301.5 123v3M301.5 129v3M301.5 135v3M301.5 141v3M301.5 147v3M301.5 153v3M301.5 159v3M301.5 165v3M301.5 171v3M301.5 177v3M301.5 183v3M301.5 189v3M301.5 195v3M301.5 201v3M301.5 207v3M301.5 213v3M301.5 219v3M301.5 225v3M301.5 231v3M301.5 237v3M301.5 243v3M301.5 249v3M301.5 255v3M301.5 261v3M301.5 267v3M301.5 273v3M301.5 279v3M301.5 285v3M301.5 291v3M301.5 297v3M301.5 303v3M301.5 309v3M301.5 315v3M301.5 321v3M301.5 327v3M301.5 333v3M301.5 339v3M301.5 345v3M301.5 351v3M301.5 357v3M301.5 363v3M301.5 369v3M301.5 375v3M301.5 381v3M301.5 387v3M301.5 393v3M301.5 399v3M301.5 405v3M301.5 411v3M301.5 417v3M301.5 423v3M301.5 429v3M301.5 435v3M301.5 441v3M301.5 447v3M301.5 453v3M301.5 459v3M301.5 465v3M301.5 471v3M301.5 477v3M301.5 483v3M301.5 489v3M301.5 495v3M301.5 501v3M301.5 507v3M301.5 513v3M301.5 519v3M301.5 525v3M301.5 531v3M301.5 537v3M301.5 543v3M301.5 549v2M333.5 34v2M333.5 39v3M333.5 45v3M333.5 51v3M333.5 57v3M333.5 63v3M333.5 69v3M333.5 75v3M333.5 81v3M333.5 87v3M333.5 93v3M333.5 99v3M333.5 105v3M333.5 111v3M333.5 117v3M333.5 123v3M333.5 129v3M333.5 135v3M333.5 141v3M333.5 147v3M333.5 153v3M333.5 159v3M333.5 165v3M333.5 171v3M333.5 177v3M333.5 183v3M333.5 189v3M333.5 195v3M333.5 201v3M333.5 207v3M333.5 213v3M333.5 219v3M333.5 225v3M333.5 231v3M333.5 237v3M333.5 243v3M333.5 249v3M333.5 255v3M333.5 261v3M333.5 267v3M333.5 273v3M333.5 279v3M333.5 285v3M333.5 291v3M333.5 297v3M333.5 303v3M333.5 309v3M333.5 315v3M333.5 321v3M333.5 327v3M333.5 333v3M333.5 339v3M333.5 345v3M333.5 351v3M333.5 357v3M333.5 363v3M333.5 369v3M333.5 375v3M333.5 381v3M333.5 387v3M333.5 393v3M333.5 399v3M333.5 405v3M333.5 411v3M333.5 417v3M333.5 423v3M333.5 429v3M333.5 435v3M333.5 441v3M333.5 447v3M333.5 453v3M333.5 459v3M333.5 465v3M333.5 471v3M333.5 477v3M333.5 483v3M333.5 489v3M333.5 495v3M333.5 501v3M333.5 507v3M333.5 513v3M333.5 519v3M333.5 525v3M333.5 531v3M333.5 537v3M333.5 543v3M333.5 549v2M365.5 34v2M365.5 39v3M365.5 45v3M365.5 51v3M365.5 57v3M365.5 63v3M365.5 69v3M365.5 75v3M365.5 81v3M365.5 87v3M365.5 93v3M365.5 99v3M365.5 105v3M365.5 111v3M365.5 117v3M365.5 123v3M365.5 129v3M365.5 135v3M365.5 141v3M365.5 147v3M365.5 153v3M365.5 159v3M365.5 165v3M365.5 171v3M365.5 177v3M365.5 183v3M365.5 189v3M365.5 195v3M365.5 201v3M365.5 207v3M365.5 213v3M365.5 219v3M365.5 225v3M365.5 231v3M365.5 237v3M365.5 243v3M365.5 249v3M365.5 255v3M365.5 261v3M365.5 267v3M365.5 273v3M365.5 279v3M365.5 285v3M365.5 291v3M365.5 297v3M365.5 303v3M365.5 309v3M365.5 315v3M365.5 321v3M365.5 327v3M365.5 333v3M365.5 339v3M365.5 345v3M365.5 351v3M365.5 357v3M365.5 363v3M365.5 369v3M365.5 375v3M365.5 381v3M365.5 387v3M365.5 393v3M365.5 399v3M365.5 405v3M365.5 411v3M365.5 417v3M365.5 423v3M365.5 429v3M365.5 435v3M365.5 441v3M365.5 447v3M365.5 453v3M365.5 459v3M365.5 465v3M365.5 471v3M365.5 477v3M365.5 483v3M365.5 489v3M365.5 495v3M365.5 501v3M365.5 507v3M365.5 513v3M365.5 519v3M365.5 525v3M365.5 531v3M365.5 537v3M365.5 543v3M365.5 549v2M397.5 34v2M397.5 39v3M397.5 45v3M397.5 51v3M397.5 57v3M397.5 63v3M397.5 69v3M397.5 75v3M397.5 81v3M397.5 87v3M397.5 93v3M397.5 99v3M397.5 105v3M397.5 111v3M397.5 117v3M397.5 123v3M397.5 129v3M397.5 135v3M397.5 141v3M397.5 147v3M397.5 153v3M397.5 159v3M397.5 165v3M397.5 171v3M397.5 177v3M397.5 183v3M397.5 189v3M397.5 195v3M397.5 201v3M397.5 207v3M397.5 213v3M397.5 219v3M397.5 225v3M397.5 231v3M397.5 237v3M397.5 243v3M397.5 249v3M397.5 255v3M397.5 261v3M397.5 267v3M397.5 273v3M397.5 279v3M397.5 285v3M397.5 291v3M397.5 297v3M397.5 303v3M397.5 309v3M397.5 315v3M397.5 321v3M397.5 327v3M397.5 333v3M397.5 339v3M397.5 345v3M397.5 351v3M397.5 357v3M397.5 363v3M397.5 369v3M397.5 375v3M397.5 381v3M397.5 387v3M397.5 393v3M397.5 399v3M397.5 405v3M397.5 411v3M397.5 417v3M397.5 423v3M397.5 429v3M397.5 435v3M397.5 441v3M397.5 447v3M397.5 453v3M397.5 459v3M397.5 465v3M397.5 471v3M397.5 477v3M397.5 483v3M397.5 489v3M397.5 495v3M397.5 501v3M397.5 507v3M397.5 513v3M397.5 519v3M397.5 525v3M397.5 531v3M397.5 537v3M397.5 543v3M397.5 549v2M429.5 34v2M429.5 39v3M429.5 45v3M429.5 51v3M429.5 57v3M429.5 63v3M429.5 69v3M429.5 75v3M429.5 81v3M429.5 87v3M429.5 93v3M429.5 99v3M429.5 105v3M429.5 111v3M429.5 117v3M429.5 123v3M429.5 129v3M429.5 135v3M429.5 141v3M429.5 147v3M429.5 153v3M429.5 159v3M429.5 165v3M429.5 171v3M429.5 177v3M429.5 183v3M429.5 189v3M429.5 195v3M429.5 201v3M429.5 207v3M429.5 213v3M429.5 219v3M429.5 225v3M429.5 231v3M429.5 237v3M429.5 243v3M429.5 249v3M429.5 255v3M429.5 261v3M429.5 267v3M429.5 273v3M429.5 279v3M429.5 285v3M429.5 291v3M429.5 297v3M429.5 303v3M429.5 309v3M429.5 315v3M429.5 321v3M429.5 327v3M429.5 333v3M429.5 339v3M429.5 345v3M429.5 351v3M429.5 357v3M429.5 363v3M429.5 369v3M429.5 375v3M429.5 381v3M429.5 387v3M429.5 393v3M429.5 399v3M429.5 405v3M429.5 411v3M429.5 417v3M429.5 423v3M429.5 429v3M429.5 435v3M429.5 441v3M429.5 447v3M429.5 453v3M429.5 459v3M429.5 465v3M429.5 471v3M429.5 477v3M429.5 483v3M429.5 489v3M429.5 495v3M429.5 501v3M429.5 507v3M429.5 513v3M429.5 519v3M429.5 525v3M429.5 531v3M429.5 537v3M429.5 543v3M429.5 549v2M461.5 34v2M461.5 39v3M461.5 45v3M461.5 51v3M461.5 57v3M461.5 63v3M461.5 69v3M461.5 75v3M461.5 81v3M461.5 87v3M461.5 93v3M461.5 99v3M461.5 105v3M461.5 111v3M461.5 117v3M461.5 123v3M461.5 129v3M461.5 135v3M461.5 141v3M461.5 147v3M461.5 153v3M461.5 159v3M461.5 165v3M461.5 171v3M461.5 177v3M461.5 183v3M461.5 189v3M461.5 195v3M461.5 201v3M461.5 207v3M461.5 213v3M461.5 219v3M461.5 225v3M461.5 231v3M461.5 237v3M461.5 243v3M461.5 249v3M461.5 255v3M461.5 261v3M461.5 267v3M461.5 273v3M461.5 279v3M461.5 285v3M461.5 291v3M461.5 297v3M461.5 303v3M461.5 309v3M461.5 315v3M461.5 321v3M461.5 327v3M461.5 333v3M461.5 339v3M461.5 345v3M461.5 351v3M461.5 357v3M461.5 363v3M461.5 369v3M461.5 375v3M461.5 381v3M461.5 387v3M461.5 393v3M461.5 399v3M461.5 405v3M461.5 411v3M461.5 417v3M461.5 423v3M461.5 429v3M461.5 435v3M461.5 441v3M461.5 447v3M461.5 453v3M461.5 459v3M461.5 465v3M461.5 471v3M461.5 477v3M461.5 483v3M461.5 489v3M461.5 495v3M461.5 501v3M461.5 507v3M461.5 513v3M461.5 519v3M461.5 525v3M461.5 531v3M461.5 537v3M461.5 543v3M461.5 549v2M493.5 34v2M493.5 39v3M493.5 45v3M493.5 51v3M493.5 57v3M493.5 63v3M493.5 69v3M493.5 75v3M493.5 81v3M493.5 87v3M493.5 93v3M493.5 99v3M493.5 105v3M493.5 111v3M493.5 117v3M493.5 123v3M493.5 129v3M493.5 135v3M493.5 141v3M493.5 147v3M493.5 153v3M493.5 159v3M493.5 165v3M493.5 171v3M493.5 177v3M493.5 183v3M493.5 189v3M493.5 195v3M493.5 201v3M493.5 207v3M493.5 213v3M493.5 219v3M493.5 225v3M493.5 231v3M493.5 237v3M493.5 243v3M493.5 249v3M493.5 255v3M493.5 261v3M493.5 267v3M493.5 273v3M493.5 279v3M493.5 285v3M493.5 291v3M493.5 297v3M493.5 303v3M493.5 309v3M493.5 315v3M493.5 321v3M493.5 327v3M493.5 333v3M493.5 339v3M493.5 345v3M493.5 351v3M493.5 357v3M493.5 363v3M493.5 369v3M493.5 375v3M493.5 381v3M493.5 387v3M493.5 393v3M493.5 399v3M493.5 405v3M493.5 411v3M493.5 417v3M493.5 423v3M493.5 429v3M493.5 435v3M493.5 441v3M493.5 447v3M493.5 453v3M493.5 459v3M493.5 465v3M493.5 471v3M493.5 477v3M493.5 483v3M493.5 489v3M493.5 495v3M493.5 501v3M493.5 507v3M493.5 513v3M493.5 519v3M493.5 525v3M493.5 531v3M493.5 537v3M493.5 543v3M493.5 549v2M525.5 34v2M525.5 39v3M525.5 45v3M525.5 51v3M525.5 57v3M525.5 63v3M525.5 69v3M525.5 75v3M525.5 81v3M525.5 87v3M525.5 93v3M525.5 99v3M525.5 105v3M525.5 111v3M525.5 117v3M525.5 123v3M525.5 129v3M525.5 135v3M525.5 141v3M525.5 147v3M525.5 153v3M525.5 159v3M525.5 165v3M525.5 171v3M525.5 177v3M525.5 183v3M525.5 189v3M525.5 195v3M525.5 201v3M525.5 207v3M525.5 213v3M525.5 219v3M525.5 225v3M525.5 231v3M525.5 237v3M525.5 243v3M525.5 249v3M525.5 255v3M525.5 261v3M525.5 267v3M525.5 273v3M525.5 279v3M525.5 285v3M525.5 291v3M525.5 297v3M525.5 303v3M525.5 309v3M525.5 315v3M525.5 321v3M525.5 327v3M525.5 333v3M525.5 339v3M525.5 345v3M525.5 351v3M525.5 357v3M525.5 363v3M525.5 369v3M525.5 375v3M525.5 381v3M525.5 387v3M525.5 393v3M525.5 399v3M525.5 405v3M525.5 411v3M525.5 417v3M525.5 423v3M525.5 429v3M525.5 435v3M525.5 441v3M525.5 447v3M525.5 453v3M525.5 459v3M525.5 465v3M525.5 471v3M525.5 477v3M525.5 483v3M525.5 489v3M525.5 495v3M525.5 501v3M525.5 507v3M525.5 513v3M525.5 519v3M525.5 525v3M525.5 531v3M525.5 537v3M525.5 543v3M525.5 549v2M557.5 34v2M557.5 39v3M557.5 45v3M557.5 51v3M557.5 57v3M557.5 63v3M557.5 69v3M557.5 75v3M557.5 81v3M557.5 87v3M557.5 93v3M557.5 99v3M557.5 105v3M557.5 111v3M557.5 117v3M557.5 123v3M557.5 129v3M557.5 135v3M557.5 141v3M557.5 147v3M557.5 153v3M557.5 159v3M557.5 165v3M557.5 171v3M557.5 177v3M557.5 183v3M557.5 189v3M557.5 195v3M557.5 201v3M557.5 207v3M557.5 213v3M557.5 219v3M557.5 225v3M557.5 231v3M557.5 237v3M557.5 243v3M557.5 249v3M557.5 255v3M557.5 261v3M557.5 267v3M557.5 273v3M557.5 279v3M557.5 285v3M557.5 291v3M557.5 297v3M557.5 303v3M557.5 309v3M557.5 315v3M557.5 321v3M557.5 327v3M557.5 333v3M557.5 339v3M557.5 345v3M557.5 351v3M557.5 357v3M557.5 363v3M557.5 369v3M557.5 375v3M557.5 381v3M557.5 387v3M557.5 393v3M557.5 399v3M557.5 405v3M557.5 411v3M557.5 417v3M557.5 423v3M557.5 429v3M557.5 435v3M557.5 441v3M557.5 447v3M557.5 453v3M557.5 459v3M557.5 465v3M557.5 471v3M557.5 477v3M557.5 483v3M557.5 489v3M557.5 495v3M557.5 501v3M557.5 507v3M557.5 513v3M557.5 519v3M557.5 525v3M557.5 531v3M557.5 537v3M557.5 543v3M557.5 549v2M589.5 34v2M589.5 39v3M589.5 45v3M589.5 51v3M589.5 57v3M589.5 63v3M589.5 69v3M589.5 75v3M589.5 81v3M589.5 87v3M589.5 93v3M589.5 99v3M589.5 105v3M589.5 111v3M589.5 117v3M589.5 123v3M589.5 129v3M589.5 135v3M589.5 141v3M589.5 147v3M589.5 153v3M589.5 159v3M589.5 165v3M589.5 171v3M589.5 177v3M589.5 183v3M589.5 189v3M589.5 195v3M589.5 201v3M589.5 207v3M589.5 213v3M589.5 219v3M589.5 225v3M589.5 231v3M589.5 237v3M589.5 243v3M589.5 249v3M589.5 255v3M589.5 261v3M589.5 267v3M589.5 273v3M589.5 279v3M589.5 285v3M589.5 291v3M589.5 297v3M589.5 303v3M589.5 309v3M589.5 315v3M589.5 321v3M589.5 327v3M589.5 333v3M589.5 339v3M589.5 345v3M589.5 351v3M589.5 357v3M589.5 363v3M589.5 369v3M589.5 375v3M589.5 381v3M589.5 387v3M589.5 393v3M589.5 399v3M589.5 405v3M589.5 411v3M589.5 417v3M589.5 423v3M589.5 429v3M589.5 435v3M589.5 441v3M589.5 447v3M589.5 453v3M589.5 459v3M589.5 465v3M589.5 471v3M589.5 477v3M589.5 483v3M589.5 489v3M589.5 495v3M589.5 501v3M589.5 507v3M589.5 513v3M589.5 519v3M589.5 525v3M589.5 531v3M589.5 537v3M589.5 543v3M589.5 549v2M621.5 34v2M621.5 39v3M621.5 45v3M621.5 51v3M621.5 57v3M621.5 63v3M621.5 69v3M621.5 75v3M621.5 81v3M621.5 87v3M621.5 93v3M621.5 99v3M621.5 105v3M621.5 111v3M621.5 117v3M621.5 123v3M621.5 129v3M621.5 135v3M621.5 141v3M621.5 147v3M621.5 153v3M621.5 159v3M621.5 165v3M621.5 171v3M621.5 177v3M621.5 183v3M621.5 189v3M621.5 195v3M621.5 201v3M621.5 207v3M621.5 213v3M621.5 219v3M621.5 225v3M621.5 231v3M621.5 237v3M621.5 243v3M621.5 249v3M621.5 255v3M621.5 261v3M621.5 267v3M621.5 273v3M621.5 279v3M621.5 285v3M621.5 291v3M621.5 297v3M621.5 303v3M621.5 309v3M621.5 315v3M621.5 321v3M621.5 327v3M621.5 333v3M621.5 339v3M621.5 345v3M621.5 351v3M621.5 357v3M621.5 363v3M621.5 369v3M621.5 375v3M621.5 381v3M621.5 387v3M621.5 393v3M621.5 399v3M621.5 405v3M621.5 411v3M621.5 417v3M621.5 423v3M621.5 429v3M621.5 435v3M621.5 441v3M621.5 447v3M621.5 453v3M621.5 459v3M621.5 465v3M621.5 471v3M621.5 477v3M621.5 483v3M621.5 489v3M621.5 495v3M621.5 501v3M621.5 507v3M621.5 513v3M621.5 519v3M621.5 525v3M621.5 531v3M621.5 537v3M621.5 543v3M621.5 549v2M653.5 34v2M653.5 39v3M653.5 45v3M653.5 51v3M653.5 57v3M653.5 63v3M653.5 69v3M653.5 75v3M653.5 81v3M653.5 87v3M653.5 93v3M653.5 99v3M653.5 105v3M653.5 111v3M653.5 117v3M653.5 123v3M653.5 129v3M653.5 135v3M653.5 141v3M653.5 147v3M653.5 153v3M653.5 159v3M653.5 165v3M653.5 171v3M653.5 177v3M653.5 183v3M653.5 189v3M653.5 195v3M653.5 201v3M653.5 207v3M653.5 213v3M653.5 219v3M653.5 225v3M653.5 231v3M653.5 237v3M653.5 243v3M653.5 249v3M653.5 255v3M653.5 261v3M653.5 267v3M653.5 273v3M653.5 279v3M653.5 285v3M653.5 291v3M653.5 297v3M653.5 303v3M653.5 309v3M653.5 315v3M653.5 321v3M653.5 327v3M653.5 333v3M653.5 339v3M653.5 345v3M653.5 351v3M653.5 357v3M653.5 363v3M653.5 369v3M653.5 375v3M653.5 381v3M653.5 387v3M653.5 393v3M653.5 399v3M653.5 405v3M653.5 411v3M653.5 417v3M653.5 423v3M653.5 429v3M653.5 435v3M653.5 441v3M653.5 447v3M653.5 453v3M653.5 459v3M653.5 465v3M653.5 471v3M653.5 477v3M653.5 483v3M653.5 489v3M653.5 495v3M653.5 501v3M653.5 507v3M653.5 513v3M653.5 519v3M653.5 525v3M653.5 531v3M653.5 537v3M653.5 543v3M653.5 549v2" stroke="#778899" stroke-width="1" fill="none" shape-rendering="crispEdges"/>
<g shape-rendering="crispEdges" fill="#ffffff">
<rect x="12" y="33" width="670" height="1"/>
<rect x="12" y="378" width="670" height="1"/>
<rect x="12" y="33" width="1" height="346"/>
<rect x="681" y="33" width="1" height="346"/>
<rect x="12" y="380" width="670" height="1"/>
<rect x="12" y="551" width="670" height="1"/>
<rect x="12" y="380" width="1" height="172"/>
<rect x="681" y="380" width="1" height="172"/>
<rect x="682" y="45" width="2" height="1"/>
<rect x="682" y="78" width="2" height="1"/>
<rect x="682" y="111" width="2" height="1"/>
<rect x="682" y="144" width="2" height="1"/>
<rect x="682" y="177" width="2" height="1"/>
<rect x="682" y="210" width="2" height="1"/>
<rect x="682" y="243" width="2" height="1"/>
<rect x="682" y="276" width="2" height="1"/>
<rect x="682" y="309" width="2" height="1"/>
<rect x="682" y="342" width="2" height="1"/>
<rect x="682" y="375" width="2" height="1"/>
<rect x="682" y="382" width="1" height="1"/>
<rect x="682" y="551" width="1" height="1"/>
<rect x="13" y="552" width="1" height="3"/>
<rect x="77" y="552" width="1" height="3"/>
<rect x="141" y="552" width="1" height="3"/>
<rect x="205" y="552" width="1" height="3"/>
<rect x="269" y="552" width="1" height="3"/>
<rect x="333" y="552" width="1" height="3"/>
<rect x="397" y="552" width="1" height="3"/>
<rect x="461" y="552" width="1" height="3"/>
<rect x="525" y="552" width="1" height="3"/>
<rect x="589" y="552" width="1" height="3"/>
<rect x="653" y="552" width="1" height="3"/>
</g>
<clipPath id="mc"><rect x="13" y="34" width="668" height="344"/></clipPath>
<clipPath id="ic"><rect x="13" y="381" width="668" height="170"/></clipPath>
<g clip-path="url(#mc)" shape-rendering="crispEdges"><rect x="13" y="297" width="1" height="73" fill="#00ff00"/><rect x="11" y="313" width="5" height="36" fill="#00ff00"/><rect x="12" y="314" width="3" height="34" fill="#000000"/><rect x="21" y="248" width="1" height="69" fill="#00ff00"/><rect x="19" y="250" width="5" height="65" fill="#00ff00"/><rect x="20" y="251" width="3" height="63" fill="#000000"/><rect x="29" y="230" width="1" height="67" fill="#00ff00"/><rect x="27" y="250" width="5" height="19" fill="#00ff00"/><rect x="28" y="251" width="3" height="17" fill="#ffffff"/><rect x="37" y="265" width="1" height="25" fill="#00ff00"/><rect x="35" y="267" width="5" height="5" fill="#00ff00"/><rect x="36" y="268" width="3" height="3" fill="#ffffff"/><rect x="45" y="270" width="1" height="41" fill="#00ff00"/><rect x="43" y="270" width="5" height="28" fill="#00ff00"/><rect x="44" y="271" width="3" height="26" fill="#ffffff"/><rect x="53" y="287" width="1" height="23" fill="#00ff00"/><rect x="51" y="292" width="5" height="7" fill="#00ff00"/><rect x="52" y="293" width="3" height="5" fill="#000000"/><rect x="61" y="287" width="1" height="16" fill="#00ff00"/><rect x="59" y="293" width="5" height="1" fill="#00ff00"/><rect x="69" y="289" width="1" height="20" fill="#00ff00"/><rect x="67" y="294" width="5" height="4" fill="#00ff00"/><rect x="68" y="295" width="3" height="2" fill="#ffffff"/><rect x="77" y="279" width="1" height="20" fill="#00ff00"/><rect x="75" y="285" width="5" height="12" fill="#00ff00"/><rect x="76" y="286" width="3" height="10" fill="#000000"/><rect x="85" y="249" width="1" height="40" fill="#00ff00"/><rect x="83" y="261" width="5" height="27" fill="#00ff00"/><rect x="84" y="262" width="3" height="25" fill="#000000"/><rect x="93" y="236" width="1" height="36" fill="#00ff00"/><rect x="91" y="248" width="5" height="14" fill="#00ff00"/><rect x="92" y="249" width="3" height="12" fill="#000000"/><rect x="101" y="228" width="1" height="44" fill="#00ff00"/><rect x="99" y="248" width="5" height="18" fill="#00ff00"/><rect x="100" y="249" width="3" height="16" fill="#ffffff"/><rect x="109" y="251" width="1" height="63" fill="#00ff00"/><rect x="107" y="264" width="5" height="39" fill="#00ff00"/><rect x="108" y="265" width="3" height="37" fill="#ffffff"/><rect x="117" y="300" width="1" height="37" fill="#00ff00"/><rect x="115" y="301" width="5" height="21" fill="#00ff00"/><rect x="116" y="302" width="3" height="19" fill="#ffffff"/><rect x="125" y="295" width="1" height="30" fill="#00ff00"/><rect x="123" y="311" width="5" height="12" fill="#00ff00"/><rect x="124" y="312" width="3" height="10" fill="#000000"/><rect x="133" y="294" width="1" height="23" fill="#00ff00"/><rect x="131" y="296" width="5" height="17" fill="#00ff00"/><rect x="132" y="297" width="3" height="15" fill="#000000"/><rect x="141" y="280" width="1" height="38" fill="#00ff00"/><rect x="139" y="280" width="5" height="16" fill="#00ff00"/><rect x="140" y="281" width="3" height="14" fill="#000000"/><rect x="149" y="275" width="1" height="45" fill="#00ff00"/><rect x="147" y="280" width="5" height="32" fill="#00ff00"/><rect x="148" y="281" width="3" height="30" fill="#ffffff"/><rect x="157" y="305" width="1" height="51" fill="#00ff00"/><rect x="155" y="312" width="5" height="26" fill="#00ff00"/><rect x="156" y="313" width="3" height="24" fill="#ffffff"/><rect x="165" y="312" width="1" height="32" fill="#00ff00"/><rect x="163" y="322" width="5" height="16" fill="#00ff00"/><rect x="164" y="323" width="3" height="14" fill="#000000"/><rect x="173" y="311" width="1" height="26" fill="#00ff00"/><rect x="171" y="316" width="5" height="7" fill="#00ff00"/><rect x="172" y="317" width="3" height="5" fill="#000000"/><rect x="181" y="297" width="1" height="33" fill="#00ff00"/><rect x="179" y="305" width="5" height="12" fill="#00ff00"/><rect x="180" y="306" width="3" height="10" fill="#000000"/><rect x="189" y="295" width="1" height="17" fill="#00ff00"/><rect x="187" y="297" width="5" height="14" fill="#00ff00"/><rect x="188" y="298" width="3" height="12" fill="#000000"/><rect x="197" y="291" width="1" height="16" fill="#00ff00"/><rect x="195" y="298" width="5" height="1" fill="#00ff00"/><rect x="205" y="268" width="1" height="33" fill="#00ff00"/><rect x="203" y="277" width="5" height="22" fill="#00ff00"/><rect x="204" y="278" width="3" height="20" fill="#000000"/><rect x="213" y="274" width="1" height="34" fill="#00ff00"/><rect x="211" y="277" width="5" height="19" fill="#00ff00"/><rect x="212" y="278" width="3" height="17" fill="#ffffff"/><rect x="221" y="278" width="1" height="20" fill="#00ff00"/><rect x="219" y="288" width="5" height="8" fill="#00ff00"/><rect x="220" y="289" width="3" height="6" fill="#000000"/><rect x="229" y="276" width="1" height="15" fill="#00ff00"/><rect x="227" y="281" width="5" height="9" fill="#00ff00"/><rect x="228" y="282" width="3" height="7" fill="#000000"/><rect x="237" y="272" width="1" height="10" fill="#00ff00"/><rect x="235" y="272" width="5" height="10" fill="#00ff00"/><rect x="236" y="273" width="3" height="8" fill="#000000"/><rect x="245" y="270" width="1" height="6" fill="#00ff00"/><rect x="243" y="272" width="5" height="1" fill="#00ff00"/><rect x="253" y="271" width="1" height="18" fill="#00ff00"/><rect x="251" y="271" width="5" height="18" fill="#00ff00"/><rect x="252" y="272" width="3" height="16" fill="#ffffff"/><rect x="261" y="275" width="1" height="14" fill="#00ff00"/><rect x="259" y="278" width="5" height="10" fill="#00ff00"/><rect x="260" y="279" width="3" height="8" fill="#000000"/><rect x="269" y="274" width="1" height="18" fill="#00ff00"/><rect x="267" y="276" width="5" height="5" fill="#00ff00"/><rect x="268" y="277" width="3" height="3" fill="#000000"/><rect x="277" y="260" width="1" height="23" fill="#00ff00"/><rect x="275" y="276" width="5" height="1" fill="#00ff00"/><rect x="285" y="270" width="1" height="15" fill="#00ff00"/><rect x="283" y="276" width="5" height="1" fill="#00ff00"/><rect x="293" y="259" width="1" height="43" fill="#00ff00"/><rect x="291" y="276" width="5" height="1" fill="#00ff00"/><rect x="301" y="266" width="1" height="29" fill="#00ff00"/><rect x="299" y="270" width="5" height="8" fill="#00ff00"/><rect x="300" y="271" width="3" height="6" fill="#000000"/><rect x="309" y="263" width="1" height="27" fill="#00ff00"/><rect x="307" y="271" width="5" height="13" fill="#00ff00"/><rect x="308" y="272" width="3" height="11" fill="#ffffff"/><rect x="317" y="281" width="1" height="14" fill="#00ff00"/><rect x="315" y="285" width="5" height="8" fill="#00ff00"/><rect x="316" y="286" width="3" height="6" fill="#ffffff"/><rect x="325" y="269" width="1" height="24" fill="#00ff00"/><rect x="323" y="272" width="5" height="21" fill="#00ff00"/><rect x="324" y="273" width="3" height="19" fill="#000000"/><rect x="333" y="272" width="1" height="17" fill="#00ff00"/><rect x="331" y="272" width="5" height="12" fill="#00ff00"/><rect x="332" y="273" width="3" height="10" fill="#ffffff"/><rect x="341" y="251" width="1" height="35" fill="#00ff00"/><rect x="339" y="269" width="5" height="15" fill="#00ff00"/><rect x="340" y="270" width="3" height="13" fill="#000000"/><rect x="349" y="254" width="1" height="22" fill="#00ff00"/><rect x="347" y="258" width="5" height="12" fill="#00ff00"/><rect x="348" y="259" width="3" height="10" fill="#000000"/><rect x="357" y="218" width="1" height="48" fill="#00ff00"/><rect x="355" y="246" width="5" height="13" fill="#00ff00"/><rect x="356" y="247" width="3" height="11" fill="#000000"/><rect x="365" y="227" width="1" height="30" fill="#00ff00"/><rect x="363" y="230" width="5" height="18" fill="#00ff00"/><rect x="364" y="231" width="3" height="16" fill="#000000"/><rect x="373" y="173" width="1" height="71" fill="#00ff00"/><rect x="371" y="178" width="5" height="52" fill="#00ff00"/><rect x="372" y="179" width="3" height="50" fill="#000000"/><rect x="381" y="116" width="1" height="79" fill="#00ff00"/><rect x="379" y="126" width="5" height="53" fill="#00ff00"/><rect x="380" y="127" width="3" height="51" fill="#000000"/><rect x="389" y="104" width="1" height="61" fill="#00ff00"/><rect x="387" y="118" width="5" height="10" fill="#00ff00"/><rect x="388" y="119" width="3" height="8" fill="#000000"/><rect x="397" y="107" width="1" height="33" fill="#00ff00"/><rect x="395" y="118" width="5" height="10" fill="#00ff00"/><rect x="396" y="119" width="3" height="8" fill="#ffffff"/><rect x="405" y="110" width="1" height="38" fill="#00ff00"/><rect x="403" y="128" width="5" height="4" fill="#00ff00"/><rect x="404" y="129" width="3" height="2" fill="#ffffff"/><rect x="413" y="111" width="1" height="27" fill="#00ff00"/><rect x="411" y="116" width="5" height="16" fill="#00ff00"/><rect x="412" y="117" width="3" height="14" fill="#000000"/><rect x="421" y="95" width="1" height="28" fill="#00ff00"/><rect x="419" y="96" width="5" height="21" fill="#00ff00"/><rect x="420" y="97" width="3" height="19" fill="#000000"/><rect x="429" y="88" width="1" height="15" fill="#00ff00"/><rect x="427" y="95" width="5" height="2" fill="#00ff00"/><rect x="437" y="64" width="1" height="35" fill="#00ff00"/><rect x="435" y="77" width="5" height="19" fill="#00ff00"/><rect x="436" y="78" width="3" height="17" fill="#000000"/><rect x="445" y="57" width="1" height="28" fill="#00ff00"/><rect x="443" y="58" width="5" height="20" fill="#00ff00"/><rect x="444" y="59" width="3" height="18" fill="#000000"/><rect x="453" y="52" width="1" height="19" fill="#00ff00"/><rect x="451" y="58" width="5" height="4" fill="#00ff00"/><rect x="452" y="59" width="3" height="2" fill="#ffffff"/><rect x="461" y="57" width="1" height="11" fill="#00ff00"/><rect x="459" y="58" width="5" height="9" fill="#00ff00"/><rect x="460" y="59" width="3" height="7" fill="#000000"/><rect x="469" y="51" width="1" height="51" fill="#00ff00"/><rect x="467" y="59" width="5" height="22" fill="#00ff00"/><rect x="468" y="60" width="3" height="20" fill="#ffffff"/><rect x="477" y="69" width="1" height="49" fill="#00ff00"/><rect x="475" y="80" width="5" height="28" fill="#00ff00"/><rect x="476" y="81" width="3" height="26" fill="#ffffff"/><rect x="485" y="80" width="1" height="39" fill="#00ff00"/><rect x="483" y="94" width="5" height="14" fill="#00ff00"/><rect x="484" y="95" width="3" height="12" fill="#000000"/><rect x="493" y="92" width="1" height="51" fill="#00ff00"/><rect x="491" y="94" width="5" height="32" fill="#00ff00"/><rect x="492" y="95" width="3" height="30" fill="#ffffff"/><rect x="501" y="113" width="1" height="25" fill="#00ff00"/><rect x="499" y="125" width="5" height="12" fill="#00ff00"/><rect x="500" y="126" width="3" height="10" fill="#ffffff"/><rect x="509" y="123" width="1" height="23" fill="#00ff00"/><rect x="507" y="123" width="5" height="14" fill="#00ff00"/><rect x="508" y="124" width="3" height="12" fill="#000000"/><rect x="517" y="102" width="1" height="25" fill="#00ff00"/><rect x="515" y="120" width="5" height="4" fill="#00ff00"/><rect x="516" y="121" width="3" height="2" fill="#000000"/><rect x="525" y="100" width="1" height="32" fill="#00ff00"/><rect x="523" y="104" width="5" height="17" fill="#00ff00"/><rect x="524" y="105" width="3" height="15" fill="#000000"/><rect x="533" y="63" width="1" height="49" fill="#00ff00"/><rect x="531" y="83" width="5" height="29" fill="#00ff00"/><rect x="532" y="84" width="3" height="27" fill="#000000"/><rect x="541" y="83" width="1" height="46" fill="#00ff00"/><rect x="539" y="83" width="5" height="35" fill="#00ff00"/><rect x="540" y="84" width="3" height="33" fill="#ffffff"/><rect x="549" y="108" width="1" height="27" fill="#00ff00"/><rect x="547" y="115" width="5" height="3" fill="#00ff00"/><rect x="548" y="116" width="3" height="1" fill="#ffffff"/><rect x="557" y="114" width="1" height="65" fill="#00ff00"/><rect x="555" y="115" width="5" height="39" fill="#00ff00"/><rect x="556" y="116" width="3" height="37" fill="#ffffff"/><rect x="565" y="118" width="1" height="44" fill="#00ff00"/><rect x="563" y="135" width="5" height="19" fill="#00ff00"/><rect x="564" y="136" width="3" height="17" fill="#000000"/><rect x="573" y="122" width="1" height="45" fill="#00ff00"/><rect x="571" y="135" width="5" height="9" fill="#00ff00"/><rect x="572" y="136" width="3" height="7" fill="#ffffff"/><rect x="581" y="136" width="1" height="51" fill="#00ff00"/><rect x="579" y="143" width="5" height="36" fill="#00ff00"/><rect x="580" y="144" width="3" height="34" fill="#ffffff"/><rect x="589" y="123" width="1" height="74" fill="#00ff00"/><rect x="587" y="172" width="5" height="7" fill="#00ff00"/><rect x="588" y="173" width="3" height="5" fill="#000000"/><rect x="597" y="133" width="1" height="54" fill="#00ff00"/><rect x="595" y="172" width="5" height="1" fill="#00ff00"/><rect x="605" y="138" width="1" height="49" fill="#00ff00"/><rect x="603" y="141" width="5" height="32" fill="#00ff00"/><rect x="604" y="142" width="3" height="30" fill="#000000"/><rect x="613" y="117" width="1" height="35" fill="#00ff00"/><rect x="611" y="118" width="5" height="24" fill="#00ff00"/><rect x="612" y="119" width="3" height="22" fill="#000000"/><rect x="621" y="110" width="1" height="29" fill="#00ff00"/><rect x="619" y="118" width="5" height="12" fill="#00ff00"/><rect x="620" y="119" width="3" height="10" fill="#ffffff"/><rect x="629" y="108" width="1" height="22" fill="#00ff00"/><rect x="627" y="113" width="5" height="17" fill="#00ff00"/><rect x="628" y="114" width="3" height="15" fill="#000000"/><rect x="637" y="113" width="1" height="22" fill="#00ff00"/><rect x="635" y="113" width="5" height="5" fill="#00ff00"/><rect x="636" y="114" width="3" height="3" fill="#ffffff"/><rect x="645" y="113" width="1" height="13" fill="#00ff00"/><rect x="643" y="115" width="5" height="3" fill="#00ff00"/><rect x="644" y="116" width="3" height="1" fill="#ffffff"/><rect x="653" y="112" width="1" height="27" fill="#00ff00"/><rect x="651" y="118" width="5" height="12" fill="#00ff00"/><rect x="652" y="119" width="3" height="10" fill="#ffffff"/><rect x="661" y="124" width="1" height="22" fill="#00ff00"/><rect x="659" y="139" width="5" height="1" fill="#00ff00"/><rect x="669" y="126" width="1" height="45" fill="#00ff00"/><rect x="667" y="130" width="5" height="23" fill="#00ff00"/><rect x="668" y="131" width="3" height="21" fill="#ffffff"/><rect x="677" y="123" width="1" height="43" fill="#00ff00"/><rect x="675" y="141" width="5" height="12" fill="#00ff00"/><rect x="676" y="142" width="3" height="10" fill="#000000"/></g>
<g clip-path="url(#mc)"><polyline points="52,382 53.4,379.6 61.6,363.3 72,346.7 82.3,330.2 98.8,313.7 113.3,303.4 125,298.6 132.3,295.6 142,292.5 149.4,291.7 166.4,291.3 173.7,291.7 179.8,294.4 188.3,295.3 195.6,297 204.2,296.5 215,295.6 222.2,295 245.3,295.2 253.8,297 268.5,297 274.5,295 285.5,291.5 300,290.9 308,289.6 316.5,287.5 327.5,283.4 345.5,279.2 355,277 365,274.6 372,268.6 381,261 394.6,249 401.4,242 410,233.3 420.7,217.2 431,204.8 441.4,192.4 452.7,178.5 463,166 475,150.5 490,135 497,129.3 506.8,121.4 516.5,114.1 526.3,105.6 534.8,101.7 548.2,101.3 555.5,102.5 570,103.7 590.2,113 607.3,121.6 611,123.4 620.7,128.2 624.8,128.9 637.2,129.6 645.4,131 664.7,131.4 670.2,133 677.8,133" fill="none" stroke="#ffff00" stroke-width="2.2" stroke-linejoin="round" shape-rendering="crispEdges"/>
<polyline points="12,378 13,377 20,359 31,345 37,332 45,322 55,313 68,301 78,297 91,287 102,278 107,278 113,281 121,286 125,287 130,288.5 149.4,288.9 154.2,291.9 161.5,294.4 168.8,296.2 173.7,298 181,301.7 188.3,305.3 195.6,308.4 200.5,308.4 206.6,306.5 215,304.7 222.2,301.9 239.2,299.5 246.5,295.2 258.7,290.3 269.7,284.8 278.2,282.4 289.2,280 300,278.7 314,278.5 344,277.6 355,273.7 365,269.4 372,262.6 379,254 386,242 396,226.4 405,209.5 410.3,198.6 420.7,180 429,164.5 437.2,149 444.5,134.5 448.5,127.5 452,121.3 456.3,111.8 459.8,105 462.4,101.5 469.2,94.6 477,95 486,91.6 509,91.6 514,93.6 520,94.9 531,95.6 536,98.3 542,101.3 549.4,105 556.7,112.3 562.8,116.5 570,119.6 578,125 588,131 598,136 613,136.5 618,138.6 625.5,140 653,140 670,139 674.4,137 678,136.5" fill="none" stroke="#00ffff" stroke-width="2.2" stroke-linejoin="round" shape-rendering="crispEdges"/></g>
<path d="M229 312 L239 322 L239 325.5 L231 317.5 L231 334 L227.2 334 L227.2 317.5 L219 325.5 L219 322 Z" fill="#ee82ee"/><polygon points="221.00,302.80 219.40,307.23 214.76,306.40 217.80,310.00 214.76,313.60 219.40,312.77 221.00,317.20 222.60,312.77 227.24,313.60 224.20,310.00 227.24,306.40 222.60,307.23" fill="#ee82ee"/>
<path d="M333 312 L343 322 L343 325.5 L335 317.5 L335 334 L331.2 334 L331.2 317.5 L323 325.5 L323 322 Z" fill="#ee82ee"/><polygon points="324.50,298.10 322.90,302.53 318.26,301.70 321.30,305.30 318.26,308.90 322.90,308.07 324.50,312.50 326.10,308.07 330.74,308.90 327.70,305.30 330.74,301.70 326.10,302.53" fill="#ee82ee"/>
<g clip-path="url(#ic)"><polyline points="12,432.2 13,432.2 21,429.2 29,428.3 37,415.4 45,425.8 53,425.8 61,425.8 69,439.8 77,440.7 85,434.5 93,440.7 101,439.4 109,435.7 117,446 125,451.4 133,470.3 141,471.9 149,471.9 157,477.7 165,477.2 173,476.7 181,469.5 189,471.4 197,484.6 205,479.5 213,484.6 221,465.7 229,446 237,446 245,446 253,465.2 261,465.2 269,425.3 277,417.7 285,420.7 293,446 301,446.5 309,446.5 317,472.6 325,457.6 333,456.9 341,444.9 349,446.7 357,431.5 365,421.8 373,409.1 381,400.4 389,399.9 397,398.3 405,393 413,393 421,393 429,389.1 437,388.4 445,387.7 453,387.7 461,387.7 469,411.4 477,421.8 485,434.5 493,470.3 501,477.2 509,480 517,465.2 525,466.9 533,457.2 541,466.9 549,482.7 557,498.6 565,501.7 573,501.7 581,501.7 589,492.5 597,492.5 605,485.2 613,473 621,468.6 629,475.9 637,475.9 645,499.3 653,499.3 661,498.6 669,490.5 677,489.5" fill="none" stroke="#20b2aa" stroke-width="2.2" stroke-linejoin="round" shape-rendering="crispEdges"/></g>
<path d="M13 546 L18 551 L13 551 Z" fill="#778899"/>
<path d="M13 34 L13 34 Z" fill="none"/>
<text x="687.5" y="49" text-rendering="geometricPrecision" font-size="9.8" fill="#ffffff" stroke="#ffffff" stroke-width="0.12" textLength="32.5" lengthAdjust="spacingAndGlyphs">136.755</text>
<text x="687.5" y="82" text-rendering="geometricPrecision" font-size="9.8" fill="#ffffff" stroke="#ffffff" stroke-width="0.12" textLength="32.5" lengthAdjust="spacingAndGlyphs">136.515</text>
<text x="687.5" y="115" text-rendering="geometricPrecision" font-size="9.8" fill="#ffffff" stroke="#ffffff" stroke-width="0.12" textLength="32.5" lengthAdjust="spacingAndGlyphs">136.280</text>
<text x="687.5" y="148" text-rendering="geometricPrecision" font-size="9.8" fill="#ffffff" stroke="#ffffff" stroke-width="0.12" textLength="32.5" lengthAdjust="spacingAndGlyphs">136.040</text>
<text x="687.5" y="181" text-rendering="geometricPrecision" font-size="9.8" fill="#ffffff" stroke="#ffffff" stroke-width="0.12" textLength="32.5" lengthAdjust="spacingAndGlyphs">135.805</text>
<text x="687.5" y="214" text-rendering="geometricPrecision" font-size="9.8" fill="#ffffff" stroke="#ffffff" stroke-width="0.12" textLength="32.5" lengthAdjust="spacingAndGlyphs">135.565</text>
<text x="687.5" y="247" text-rendering="geometricPrecision" font-size="9.8" fill="#ffffff" stroke="#ffffff" stroke-width="0.12" textLength="32.5" lengthAdjust="spacingAndGlyphs">135.325</text>
<text x="687.5" y="280" text-rendering="geometricPrecision" font-size="9.8" fill="#ffffff" stroke="#ffffff" stroke-width="0.12" textLength="32.5" lengthAdjust="spacingAndGlyphs">135.090</text>
<text x="687.5" y="313" text-rendering="geometricPrecision" font-size="9.8" fill="#ffffff" stroke="#ffffff" stroke-width="0.12" textLength="32.5" lengthAdjust="spacingAndGlyphs">134.850</text>
<text x="687.5" y="346" text-rendering="geometricPrecision" font-size="9.8" fill="#ffffff" stroke="#ffffff" stroke-width="0.12" textLength="32.5" lengthAdjust="spacingAndGlyphs">134.615</text>
<text x="687.5" y="379" text-rendering="geometricPrecision" font-size="9.8" fill="#ffffff" stroke="#ffffff" stroke-width="0.12" textLength="32.5" lengthAdjust="spacingAndGlyphs">134.375</text>
<text x="685.2" y="390.9" text-rendering="geometricPrecision" font-size="9.8" fill="#ffffff" stroke="#ffffff" stroke-width="0.12" textLength="5.2" lengthAdjust="spacingAndGlyphs">1</text>
<text x="684.2" y="436" text-rendering="geometricPrecision" font-size="9.8" fill="#ffffff" stroke="#ffffff" stroke-width="0.12" textLength="13" lengthAdjust="spacingAndGlyphs">0.7</text>
<text x="684.2" y="470" text-rendering="geometricPrecision" font-size="9.8" fill="#ffffff" stroke="#ffffff" stroke-width="0.12" textLength="13" lengthAdjust="spacingAndGlyphs">0.5</text>
<text x="684.2" y="504" text-rendering="geometricPrecision" font-size="9.8" fill="#ffffff" stroke="#ffffff" stroke-width="0.12" textLength="13" lengthAdjust="spacingAndGlyphs">0.3</text>
<text x="684.6" y="548" text-rendering="geometricPrecision" font-size="9.8" fill="#ffffff" stroke="#ffffff" stroke-width="0.12" textLength="5.6" lengthAdjust="spacingAndGlyphs">0</text>
<text x="13" y="563.6" text-rendering="geometricPrecision" font-size="9.8" fill="#ffffff" stroke="#ffffff" stroke-width="0.12" textLength="48.7" lengthAdjust="spacingAndGlyphs">17 Jun 2022</text>
<text x="77" y="563.6" text-rendering="geometricPrecision" font-size="9.8" fill="#ffffff" stroke="#ffffff" stroke-width="0.12" textLength="52.6" lengthAdjust="spacingAndGlyphs">20 Jun 00:00</text>
<text x="141" y="563.6" text-rendering="geometricPrecision" font-size="9.8" fill="#ffffff" stroke="#ffffff" stroke-width="0.12" textLength="52.6" lengthAdjust="spacingAndGlyphs">20 Jun 08:00</text>
<text x="205" y="563.6" text-rendering="geometricPrecision" font-size="9.8" fill="#ffffff" stroke="#ffffff" stroke-width="0.12" textLength="52.6" lengthAdjust="spacingAndGlyphs">20 Jun 16:00</text>
<text x="269" y="563.6" text-rendering="geometricPrecision" font-size="9.8" fill="#ffffff" stroke="#ffffff" stroke-width="0.12" textLength="52.6" lengthAdjust="spacingAndGlyphs">21 Jun 00:00</text>
<text x="333" y="563.6" text-rendering="geometricPrecision" font-size="9.8" fill="#ffffff" stroke="#ffffff" stroke-width="0.12" textLength="52.6" lengthAdjust="spacingAndGlyphs">21 Jun 08:00</text>
<text x="397" y="563.6" text-rendering="geometricPrecision" font-size="9.8" fill="#ffffff" stroke="#ffffff" stroke-width="0.12" textLength="52.6" lengthAdjust="spacingAndGlyphs">21 Jun 16:00</text>
<text x="461" y="563.6" text-rendering="geometricPrecision" font-size="9.8" fill="#ffffff" stroke="#ffffff" stroke-width="0.12" textLength="52.6" lengthAdjust="spacingAndGlyphs">22 Jun 00:00</text>
<text x="525" y="563.6" text-rendering="geometricPrecision" font-size="9.8" fill="#ffffff" stroke="#ffffff" stroke-width="0.12" textLength="52.6" lengthAdjust="spacingAndGlyphs">22 Jun 08:00</text>
<text x="589" y="563.6" text-rendering="geometricPrecision" font-size="9.8" fill="#ffffff" stroke="#ffffff" stroke-width="0.12" textLength="52.6" lengthAdjust="spacingAndGlyphs">22 Jun 16:00</text>
<text x="653" y="563.6" text-rendering="geometricPrecision" font-size="9.8" fill="#ffffff" stroke="#ffffff" stroke-width="0.12" textLength="52.6" lengthAdjust="spacingAndGlyphs">23 Jun 00:00</text>
<text x="17.5" y="393" text-rendering="geometricPrecision" font-size="9.8" fill="#ffffff" stroke="#ffffff" stroke-width="0.12" textLength="66.2" lengthAdjust="spacingAndGlyphs">DeM(14) 0.4624</text>
<path d="M16 40 L23 40 L19.5 44 Z" fill="#ffffff"/>
<text x="28.6" y="45.2" text-rendering="geometricPrecision" font-size="9.8" fill="#ffffff" stroke="#ffffff" stroke-width="0.12" textLength="50.2" lengthAdjust="spacingAndGlyphs">USDJPY,H1</text>
<text x="85.5" y="45.2" text-rendering="geometricPrecision" font-size="9.8" fill="#ffffff" stroke="#ffffff" stroke-width="0.12" textLength="32.3" lengthAdjust="spacingAndGlyphs">144.687</text>
<text x="121.5" y="45.2" text-rendering="geometricPrecision" font-size="9.8" fill="#ffffff" stroke="#ffffff" stroke-width="0.12" textLength="32.3" lengthAdjust="spacingAndGlyphs">144.764</text>
<text x="157.5" y="45.2" text-rendering="geometricPrecision" font-size="9.8" fill="#ffffff" stroke="#ffffff" stroke-width="0.12" textLength="32.3" lengthAdjust="spacingAndGlyphs">144.633</text>
<text x="193.3" y="45.2" text-rendering="geometricPrecision" font-size="9.8" fill="#ffffff" stroke="#ffffff" stroke-width="0.12" textLength="32.3" lengthAdjust="spacingAndGlyphs">144.701</text>
</svg></body></html>
